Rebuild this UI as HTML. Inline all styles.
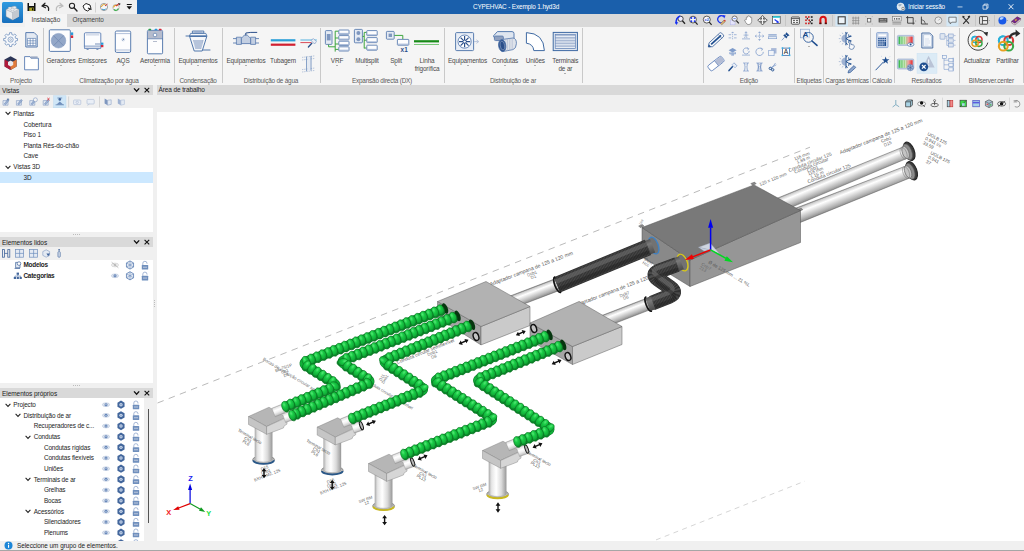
<!DOCTYPE html>
<html lang="pt"><head><meta charset="utf-8"><title>CYPEHVAC - Exemplo 1.hyd3d</title>
<style>
html,body{margin:0;padding:0}
body{width:1024px;height:551px;position:relative;overflow:hidden;background:#f0f0f0;font-family:"Liberation Sans",sans-serif;font-size:6.4px;color:#444;line-height:1}
div,span,svg{position:absolute;box-sizing:border-box}
.t{white-space:nowrap;letter-spacing:-0.05px}
.c{transform:translateX(-50%);text-align:center;white-space:nowrap;letter-spacing:-0.14px}
#titlebar{left:0;top:0;width:1024px;height:14px;background:#1a5fab}
#qat{left:0;top:0;width:136.6px;height:14px;background:#f1f1f1}
#tabs{left:0;top:14px;width:1024px;height:12.5px;background:#d9d9d9}
#ribbon{left:0;top:26.5px;width:1024px;height:58px;background:#f5f5f5}
.sep{width:1px;background:#c9c9c9;top:28px;height:55px}
.gl{top:78.1px;color:#5a5a5a;letter-spacing:-0.2px}
.bl{top:57px;color:#4a4a4a}
.dd{width:0;height:0;border-left:1.7px solid transparent;border-right:1.7px solid transparent;border-top:1.9px solid #6a6a6a;transform:translateX(-50%)}
.ph{left:0;width:152.5px;height:10.3px;background:#d9d9d9;color:#222}
.ph .t{left:2px;top:3px;font-size:6.5px}
.row{left:0;width:152.5px;height:10.65px;color:#222}
.row .t{top:2.1px}
svg{overflow:visible}

</style></head>
<body>
<div id="titlebar"></div>
<div id="qat"></div>
<div id="tabs"></div>
<div id="acttab" style="left:0;top:0;width:25px;height:26.5px;background:#f1f1f1"></div>
<div style="left:25px;top:14px;width:41.5px;height:13px;background:#f5f5f5"></div>
<div class="t" style="left:31.5px;top:16.6px;color:#444">Instalação</div>
<div class="t" style="left:72.5px;top:16.6px;color:#444">Orçamento</div>
<div class="t" style="left:473px;top:3.6px;color:#fff;letter-spacing:-0.14px">CYPEHVAC - Exemplo 1.hyd3d</div>
<div class="t" style="left:908px;top:3.8px;color:#fff;letter-spacing:-0.15px">Iniciar sessão</div>
<!-- app icon -->
<svg style="left:2px;top:2px" width="21" height="21" viewBox="0 0 21 21">
 <defs><linearGradient id="ag" x1="0" y1="0" x2="0" y2="1"><stop offset="0" stop-color="#2f9ae0"/><stop offset="1" stop-color="#176fbd"/></linearGradient></defs>
 <rect x="0" y="0" width="21" height="21" rx="1.5" fill="url(#ag)"/>
 <path d="M4 7.5 L10.5 4.5 L17 7.5 L17 14.5 L10.5 18 L4 14.5 Z" fill="#e9ecef" stroke="#7f8a96" stroke-width="0.5"/>
 <path d="M4 7.5 L10.5 10.5 L17 7.5 M10.5 10.5 L10.5 18" fill="none" stroke="#8d98a4" stroke-width="0.5"/>
 <path d="M10.5 10.5 L17 7.5 L17 14.5 L10.5 18 Z" fill="#c3c9d0"/>
 <ellipse cx="8" cy="6" rx="2" ry="1" fill="#f8f9fa" stroke="#8d98a4" stroke-width="0.4"/>
 <ellipse cx="12.5" cy="5.2" rx="2" ry="1" fill="#f8f9fa" stroke="#8d98a4" stroke-width="0.4"/>
 <ellipse cx="10.5" cy="7.8" rx="2" ry="1" fill="#f8f9fa" stroke="#8d98a4" stroke-width="0.4"/>
</svg>
<!-- quick access icons -->
<svg style="left:26px;top:2px" width="112" height="11" viewBox="26 2 112 11">
 <!-- save -->
 <rect x="27.5" y="3" width="8" height="8" fill="#111"/><rect x="29" y="3" width="5" height="3" fill="#f1f1f1"/><rect x="29.2" y="7.6" width="4.6" height="3.4" fill="#a8a228"/><rect x="32" y="8.2" width="1.2" height="2.2" fill="#111"/>
 <!-- undo -->
 <path d="M42 6 L45 3.2 M42 6 L45.5 7.8 M42 6 C46 4.5 49.5 6 48.5 10.5" fill="none" stroke="#222" stroke-width="1.2" stroke-linecap="round"/>
 <!-- redo -->
 <path d="M63 6 L60 3.2 M63 6 L59.5 7.8 M63 6 C59 4.5 55.5 6 56.5 10.5" fill="none" stroke="#bdbdbd" stroke-width="1.2" stroke-linecap="round"/>
 <!-- zoom -->
 <circle cx="72" cy="5.8" r="2.6" fill="none" stroke="#222" stroke-width="1.1"/><path d="M74 7.8 L77 11" stroke="#222" stroke-width="1.4" stroke-linecap="round"/>
 <!-- hand/pan -->
 <path d="M83 6 L86 3.5 L90 5 L91 8.5 L87.5 11 L84.5 9.5 Z" fill="#fff" stroke="#222" stroke-width="1"/><path d="M88 8 L91.5 9.5" stroke="#222" stroke-width="1.3"/>
 <rect x="95" y="2.5" width="0.7" height="10" fill="#c4c4c4"/>
 <!-- two colour icons -->
 <circle cx="104" cy="7" r="3.6" fill="#f7f7f7" stroke="#8c8c8c" stroke-width="0.8"/><path d="M101.5 7 A2.5 2.5 0 0 1 106 5.6" fill="none" stroke="#e2a020" stroke-width="1"/><path d="M106 8.5 A2.5 2.5 0 0 1 102 9" fill="none" stroke="#3a9ad0" stroke-width="1"/><path d="M105 6 L107.5 4" stroke="#d03030" stroke-width="0.9"/>
 <circle cx="116" cy="7.6" r="3.2" fill="#f7f7f7" stroke="#9a9a9a" stroke-width="0.6"/><path d="M113.6 7.6 A2.4 2.4 0 0 1 117.5 5.8" fill="none" stroke="#e2a020" stroke-width="1.1"/><path d="M118.3 8.4 A2.4 2.4 0 0 1 114 9.4" fill="none" stroke="#3ab04a" stroke-width="1.1"/><path d="M116 6.2 L119 3.6" stroke="#d03030" stroke-width="1.1"/><path d="M118 3 L120.5 3.4 L119.8 5.6" fill="#333"/>
 <!-- dropdown -->
 <rect x="126.8" y="4" width="5" height="1" fill="#111"/><path d="M126.6 6.2 L132 6.2 L129.3 9.4 Z" fill="#111"/>
</svg>
<!-- window controls -->
<svg style="left:890px;top:0" width="134" height="14" viewBox="890 0 134 14">
 <circle cx="900.6" cy="6.6" r="3.6" fill="#dfe7ee" stroke="#fff" stroke-width="0.5"/><path d="M898 5 Q900 3.4 902 4.4 Q901 6 899.4 6.6 Z" fill="#9fb2c4"/><circle cx="903" cy="8.6" r="2" fill="#8a8a8a" stroke="#fff" stroke-width="0.5"/><rect x="901.8" y="8.3" width="2.4" height="0.7" fill="#fff"/>
 <rect x="957.5" y="6.6" width="5" height="0.7" fill="#fff"/>
 <path d="M983 5.2 h3.8 v4 h-3.8 Z M984.2 5.2 v-1.1 h3.8 v4 h-1.2" fill="none" stroke="#fff" stroke-width="0.7"/>
 <path d="M1008.6 4.2 L1013.4 9.2 M1013.4 4.2 L1008.6 9.2" stroke="#fff" stroke-width="0.9"/>
</svg>

<div id="ribbon"></div>
<div class="sep" style="left:43.0px"></div>
<div class="sep" style="left:174.0px"></div>
<div class="sep" style="left:221.5px"></div>
<div class="sep" style="left:320.0px"></div>
<div class="sep" style="left:444.0px"></div>
<div class="sep" style="left:582.0px"></div>
<div class="sep" style="left:703.0px"></div>
<div class="sep" style="left:794.0px"></div>
<div class="sep" style="left:822.5px"></div>
<div class="sep" style="left:869.5px"></div>
<div class="sep" style="left:893.5px"></div>
<div class="sep" style="left:958.5px"></div>
<div class="sep" style="left:1022.5px"></div>
<div class="c bl" style="left:61px;line-height:8px;top:56.9px">Geradores</div>
<div class="dd" style="left:61px;top:64.6px"></div>
<div class="c bl" style="left:92.5px;line-height:8px;top:56.9px">Emissores</div>
<div class="dd" style="left:92.5px;top:64.6px"></div>
<div class="c bl" style="left:123px;line-height:8px;top:56.9px">AQS</div>
<div class="dd" style="left:123px;top:64.6px"></div>
<div class="c bl" style="left:155px;line-height:8px;top:56.9px">Aerotermia</div>
<div class="dd" style="left:155px;top:64.6px"></div>
<div class="c bl" style="left:198px;line-height:8px;top:56.9px">Equipamentos</div>
<div class="dd" style="left:198px;top:64.6px"></div>
<div class="c bl" style="left:246px;line-height:8px;top:56.9px">Equipamentos</div>
<div class="dd" style="left:246px;top:64.6px"></div>
<div class="c bl" style="left:283px;line-height:8px;top:56.9px">Tubagem</div>
<div class="c bl" style="left:337px;line-height:8px;top:56.9px">VRF</div>
<div class="dd" style="left:337px;top:64.6px"></div>
<div class="c bl" style="left:367px;line-height:8px;top:56.9px">Multisplit</div>
<div class="dd" style="left:367px;top:64.6px"></div>
<div class="c bl" style="left:396px;line-height:8px;top:56.9px">Split</div>
<div class="dd" style="left:396px;top:64.6px"></div>
<div class="c bl" style="left:427px;line-height:8px;top:56.9px">Linha<br>frigorífica</div>
<div class="c bl" style="left:467.5px;line-height:8px;top:56.9px">Equipamentos</div>
<div class="dd" style="left:467.5px;top:64.6px"></div>
<div class="c bl" style="left:505px;line-height:8px;top:56.9px">Condutas</div>
<div class="dd" style="left:505px;top:64.6px"></div>
<div class="c bl" style="left:535.4px;line-height:8px;top:56.9px">Uniões</div>
<div class="dd" style="left:535.4px;top:64.6px"></div>
<div class="c bl" style="left:565.4px;line-height:8px;top:56.9px">Terminais<br>de ar</div>
<div class="dd" style="left:565.4px;top:72.6px"></div>
<div class="c bl" style="left:977px;line-height:8px;top:56.9px">Actualizar</div>
<div class="c bl" style="left:1007.5px;line-height:8px;top:56.9px">Partilhar</div>
<div class="dd" style="left:808.8px;top:46.4px"></div>
<div class="c gl" style="left:21px">Projecto</div>
<div class="c gl" style="left:109px">Climatização por água</div>
<div class="c gl" style="left:198px">Condensação</div>
<div class="c gl" style="left:271px">Distribuição de água</div>
<div class="c gl" style="left:382px">Expansão directa (DX)</div>
<div class="c gl" style="left:513px">Distribuição de ar</div>
<div class="c gl" style="left:748.8px">Edição</div>
<div class="c gl" style="left:809px">Etiquetas</div>
<div class="c gl" style="left:847px">Cargas térmicas</div>
<div class="c gl" style="left:882px">Cálculo</div>
<div class="c gl" style="left:926.5px">Resultados</div>
<div class="c gl" style="left:991.3px">BIMserver.center</div>
<svg style="left:0;top:0" width="1024" height="85" viewBox="0 0 1024 85">
<defs>
 <linearGradient id="rg1" x1="0" y1="0" x2="1" y2="0"><stop offset="0" stop-color="#2fb84a"/><stop offset="0.45" stop-color="#a8d890"/><stop offset="0.7" stop-color="#f0a0a0"/><stop offset="1" stop-color="#e52a2a"/></linearGradient>
</defs>
<g id="ic-projecto">
 <!-- gear -->
 <path d="M15.65 38.36L17.52 38.55L17.52 40.65L15.65 40.84L15.05 42.30L16.23 43.75L14.75 45.23L13.30 44.05L11.84 44.65L11.65 46.52L9.55 46.52L9.36 44.65L7.90 44.05L6.45 45.23L4.97 43.75L6.15 42.30L5.55 40.84L3.68 40.65L3.68 38.55L5.55 38.36L6.15 36.90L4.97 35.45L6.45 33.97L7.90 35.15L9.36 34.55L9.55 32.68L11.65 32.68L11.84 34.55L13.30 35.15L14.75 33.97L16.23 35.45L15.05 36.90Z" fill="#f7f9fc" stroke="#6f8fbd" stroke-width="0.8" stroke-linejoin="round"/><circle cx="10.6" cy="39.6" r="2.6" fill="#f5f5f5" stroke="#6f8fbd" stroke-width="0.7"/><circle cx="10.6" cy="39.6" r="0.9" fill="none" stroke="#6f8fbd" stroke-width="0.5"/>
 <!-- sheet -->
 <path d="M25.8 32.6h8.4l3 3v11.4h-11.4z" fill="#e4eaf3" stroke="#4a70a8" stroke-width="0.9"/>
 <path d="M27.4 38.4h8.4v7.2h-8.4zM27.4 40.8h8.4M27.4 43.2h8.4M30.2 38.4v7.2M33 38.4v7.2" fill="#fff" stroke="#4a70a8" stroke-width="0.6"/>
 <!-- cube -->
 <path d="M10.6 56.2l6 3.2v7.2l-6 3.4-6-3.4v-7.2z" fill="#2b3556"/>
 <path d="M4.6 59.4l6 3.4v7.2l-6-3.4z" fill="#b01a3a"/>
 <path d="M16.6 59.4l-6 3.4v7.2l6-3.4z" fill="#e07a3a"/>
 <path d="M10.6 60.4l2.6 1.5v3l-2.6 1.5-2.6-1.5v-3z" fill="#e9e9ee"/>
 <!-- folder -->
 <path d="M24.6 56.6h5.4l1 1.6h7.4v11.6h-13.8z" fill="#fff" stroke="#5a7db3" stroke-width="0.9"/><rect x="30.6" y="56.4" width="7" height="1.8" fill="#9aa9c4"/>
</g>
<g id="ic-clima">
 <!-- geradores -->
 <rect x="49.3" y="29.8" width="21" height="21.6" rx="1" fill="#fdfdfe" stroke="#4a70a8" stroke-width="0.9"/>
 <circle cx="58.5" cy="40.7" r="7.3" fill="#93a7c8"/><circle cx="58.5" cy="40.7" r="7.3" fill="none" stroke="#7f97bf" stroke-width="0.5"/>
 <path d="M53.4 35.6l10.2 10.2M63.6 35.6l-10.2 10.2" stroke="#6f86b0" stroke-width="0.7"/>
 <rect x="70.8" y="32.4" width="2.4" height="2.6" fill="#2a9ad8"/><rect x="70.8" y="35.4" width="2.4" height="2.6" fill="#d6283a"/>
 <!-- emissores -->
 <rect x="84.4" y="32.8" width="16.4" height="15.4" rx="1" fill="#fbfcfe" stroke="#5a7db3" stroke-width="0.9"/>
 <rect x="86" y="33.6" width="13.2" height="2" fill="#d5dcea"/><rect x="84.4" y="46" width="16.4" height="2.4" fill="#d5dcea" stroke="#5a7db3" stroke-width="0.6"/>
 <rect x="86.6" y="48.4" width="2" height="1.6" fill="#7f97bf"/><rect x="96.4" y="48.4" width="2" height="1.6" fill="#7f97bf"/>
 <rect x="95" y="43" width="5" height="2.2" fill="#b9c6dc"/>
 <rect x="101" y="42.6" width="2.4" height="2.2" fill="#2a9ad8"/><rect x="101" y="45" width="2.4" height="2.2" fill="#d6283a"/>
 <!-- AQS -->
 <rect x="115.3" y="31" width="15.4" height="21.4" rx="1.4" fill="#fdfdfe" stroke="#4a70a8" stroke-width="0.9"/>
 <path d="M115.5 33.6h15M115.5 50h15" stroke="#7f97bf" stroke-width="0.6"/><circle cx="123.2" cy="39.6" r="1.5" fill="#e4eaf3" stroke="#b9c6dc" stroke-width="0.4"/><path d="M122.6 40.2l1.4-1.4" stroke="#2b4f8a" stroke-width="0.8"/>
 <!-- aerotermia -->
 <rect x="147.4" y="30.4" width="15.2" height="23.4" rx="1" fill="#fdfdfe" stroke="#4a70a8" stroke-width="0.9"/>
 <rect x="147.9" y="30.9" width="14.2" height="7.8" fill="#b5bccd"/><path d="M147.6 38.8h15" stroke="#4a70a8" stroke-width="0.7"/>
 <circle cx="155" cy="35" r="1.8" fill="#fff" stroke="#4a70a8" stroke-width="0.6"/><rect x="153" y="41" width="4" height="1" fill="#b5bccd"/>
 <rect x="148.4" y="28.8" width="2.8" height="1.5" rx="0.6" fill="#2ca04a"/><rect x="154.6" y="28.8" width="2.8" height="1.5" rx="0.6" fill="#2a9ad8"/><rect x="158.8" y="28.8" width="2.8" height="1.5" rx="0.6" fill="#d6283a"/>
</g>
<g id="ic-cond">
 <path d="M192.4 31h11.4v2.2h-11.4z" fill="#dfe6f0" stroke="#3f6aa3" stroke-width="0.8"/>
 <path d="M190.6 33.4h15.2l1.2 2.8h-17.6z" fill="#f5f7fa" stroke="#3f6aa3" stroke-width="0.8"/>
 <path d="M189.6 36.4l4.6 14.6h8l4.6-14.6z" fill="#f5f7fa" stroke="#3f6aa3" stroke-width="0.9"/>
 <path d="M193 40h10.6l-2.4 9h-5.8z" fill="#a9b9d4"/><path d="M195 40v8M197 40v9M199 40v9M201 40v8" stroke="#dfe6f0" stroke-width="0.5"/>
 <path d="M185.6 36h20.6M202.6 50h7.8" stroke="#3f6aa3" stroke-width="0.9"/>
 <path d="M194.4 32h7.4" stroke="#7f97bf" stroke-width="0.7"/>
</g>
<g id="ic-agua">
 <!-- valve -->
 <path d="M233 38.6h26M233 43h26" stroke="#4a70a8" stroke-width="0.8"/>
 <path d="M236.4 37.2h5v7.2h-5zM250.6 37.2h5v7.2h-5z" fill="#c3cfe2" stroke="#4a70a8" stroke-width="0.7"/>
 <path d="M241.4 38.4l3-3.4h2.8l3.4 3.4v5.2h-9.2z" fill="#c3cfe2" stroke="#4a70a8" stroke-width="0.7"/>
 <path d="M245.8 35.4v-2.4l5-0.6h6.4" fill="none" stroke="#2b4f8a" stroke-width="1"/>
 <!-- tubagem -->
 <rect x="270.8" y="39.2" width="24.6" height="2.2" fill="#2a9fd8"/><rect x="270.8" y="43.6" width="24.6" height="2.2" fill="#d02030"/>
 <!-- brush on lines -->
 <path d="M300.4 40h16.4" stroke="#2a9fd8" stroke-width="0.8"/><path d="M300.4 42.6h11" stroke="#d02030" stroke-width="0.8"/>
 <path d="M311 40.4l2.4-1.8 3 3-1.8 2.4z" fill="#e9eef6" stroke="#6f8fbd" stroke-width="0.6"/><path d="M311.8 43.2l-3.4 3.8" stroke="#2b4f8a" stroke-width="1.3" stroke-linecap="round"/>
 <!-- vertical pipe section -->
 <path d="M302 57.4l13-1.6M302 60l13-1.6M302 69.6l13-1.6M302 72l13-1.6" stroke="#8fa6cb" stroke-width="0.6" stroke-dasharray="1.4 0.8"/>
 <path d="M306.6 56.6v14.6M311 56v14.6" stroke="#6f8fbd" stroke-width="0.9"/><rect x="307.6" y="57" width="2.4" height="13.6" fill="#e4eaf3"/>
</g>
<g id="ic-dx">
 <!-- VRF -->
 <rect x="325.4" y="30.6" width="6.6" height="13.8" rx="0.8" fill="#e4eaf3" stroke="#4a70a8" stroke-width="0.8"/><rect x="326.8" y="34" width="3.8" height="6.4" fill="#7f97bf"/>
 <path d="M328.6 44.6v2.2h6.6M335.2 51.6v-20.4h3.4M335.2 38h3.4M335.2 44h3.4M335.2 49.4h3.4" fill="none" stroke="#3ea53e" stroke-width="1"/>
 <g fill="#fdfdfe" stroke="#4a70a8" stroke-width="0.8"><rect x="338.8" y="30" width="10.2" height="4.2" rx="0.6"/><rect x="338.8" y="35.6" width="10.2" height="4.2" rx="0.6"/><rect x="338.8" y="41.2" width="10.2" height="4.2" rx="0.6"/><rect x="338.8" y="46.8" width="10.2" height="4.2" rx="0.6"/></g>
 <path d="M339 33.4h9.8M339 39h9.8M339 44.6h9.8M339 50.2h9.8" stroke="#9fb2d2" stroke-width="0.9"/>
 <!-- Multisplit -->
 <rect x="354.4" y="29.4" width="8" height="13.4" rx="0.8" fill="#e4eaf3" stroke="#4a70a8" stroke-width="0.8"/><circle cx="358.4" cy="33" r="2" fill="#7f97bf"/><circle cx="358.4" cy="39.2" r="2" fill="#7f97bf"/>
 <path d="M362.6 36.4h1.6M364.2 48.4v-16h2.4M364.2 40.2h2.4M364.2 48h2.4" fill="none" stroke="#3ea53e" stroke-width="1"/>
 <g fill="#fdfdfe" stroke="#4a70a8" stroke-width="0.8"><rect x="366.8" y="30.6" width="10.4" height="5" rx="0.6"/><rect x="366.8" y="37.6" width="10.4" height="5" rx="0.6"/><rect x="366.8" y="45.2" width="10.4" height="5" rx="0.6"/></g>
 <path d="M367 34.8h10M367 41.8h10M367 49.4h10" stroke="#9fb2d2" stroke-width="0.9"/>
 <!-- Split -->
 <rect x="386.4" y="31.4" width="7.8" height="7.8" rx="0.8" fill="#e4eaf3" stroke="#4a70a8" stroke-width="0.8"/><rect x="388.6" y="33.6" width="3.4" height="3.4" fill="#7f97bf"/>
 <path d="M394.4 35.4h8.4v3.8" fill="none" stroke="#3ea53e" stroke-width="1"/>
 <rect x="397.4" y="39.4" width="11.4" height="5.8" rx="0.6" fill="#fdfdfe" stroke="#4a70a8" stroke-width="0.8"/><path d="M397.6 44.2h11" stroke="#9fb2d2" stroke-width="1"/>
 <text x="400.6" y="51.6" font-family="Liberation Sans, sans-serif" font-weight="bold" font-size="6.4" fill="#2b4f8a">x1</text>
 <!-- Linha -->
 <rect x="414" y="40.2" width="25" height="2.2" fill="#178a17"/><rect x="414" y="44" width="25" height="0.9" fill="#6cc46c"/>
</g>
<g id="ic-ar">
 <!-- fan -->
 <rect x="455.6" y="32.6" width="18" height="18" rx="1" fill="#e9eef6" stroke="#4a70a8" stroke-width="0.9"/>
 <circle cx="464.6" cy="41.6" r="6.6" fill="#fff" stroke="#4a70a8" stroke-width="0.8"/>
 <path d="M464.6 36v11.2M459 41.6h11.2M460.6 37.6l8 8M468.6 37.6l-8 8" stroke="#2b4f8a" stroke-width="1.2"/><circle cx="464.6" cy="41.6" r="1.2" fill="#fff"/>
 <path d="M474 41.6h4M476.4 39.8l2.4 1.8-2.4 1.8" fill="none" stroke="#a9b9d4" stroke-width="0.8"/>
 <!-- condutas -->
 <path d="M493.4 36l4-4.4h14.6q2 0 2 2v6.4h-18z" fill="#dfe6f0" stroke="#4a70a8" stroke-width="0.9"/>
 <rect x="494.4" y="36" width="9" height="4.6" rx="1.2" fill="#8fa0bf" stroke="#4a70a8" stroke-width="0.7"/>
 <path d="M501.4 39.6l11.6-1.6q3.6 0.6 3.4 5.6t-3.4 6l-10.6 2z" fill="#dfe3ea" stroke="#4a70a8" stroke-width="0.8"/>
 <path d="M505 39.2v12M507.4 38.8v12M509.8 38.4v12M512.2 38.2v11.6" stroke="#aab6cc" stroke-width="0.6"/>
 <ellipse cx="502.2" cy="45.6" rx="3.6" ry="6" fill="#2b4f8a" stroke="#4a70a8" stroke-width="0.8" transform="rotate(-8 502.2 45.6)"/><ellipse cx="502.4" cy="45.6" rx="2.2" ry="4.4" fill="none" stroke="#a9b9d4" stroke-width="0.5" transform="rotate(-8 502.4 45.6)"/>
 <!-- uniões -->
 <path d="M526.4 32.6q17.4 0.6 18 18h-10.6q-0.6-6.6-7.4-7.4z" fill="#fff" stroke="#3f6aa3" stroke-width="1"/>
 <!-- terminais -->
 <rect x="553.2" y="32.4" width="24.2" height="18.2" fill="#dfe6f0" stroke="#3f6aa3" stroke-width="1"/>
 <rect x="555.2" y="34.4" width="20.2" height="14.2" fill="#a9b9d4"/>
 <path d="M555.2 36.4h20.2M555.2 39.2h20.2M555.2 42h20.2M555.2 44.8h20.2M555.2 47.4h20.2" stroke="#eef2f8" stroke-width="1"/>
 <rect x="555.2" y="34.4" width="20.2" height="14.2" fill="none" stroke="#5a7db3" stroke-width="0.6"/>
</g>
<g id="ic-edicao">
<g transform="translate(716 40) rotate(-42.5)"><path d="M-10.4 0l3.4-2.6h14.4q1.4 0 1.4 1.3v2.6q0 1.3-1.4 1.3h-14.4z" fill="#f7f9fc" stroke="#42669c" stroke-width="0.8"/><path d="M-6.6 0h13.4" stroke="#1f4e8f" stroke-width="1.7"/><path d="M-10.4 0l2.2-1.7v3.4z" fill="#1f4e8f"/><path d="M5.4 -2.6v5.2" stroke="#42669c" stroke-width="0.6"/></g>
<g transform="translate(716 63.6) rotate(-38)"><rect x="-8.6" y="-3.3" width="17.2" height="6.6" rx="1.8" fill="#fff" stroke="#5a7db8" stroke-width="0.8"/><path d="M0.6 -2.9h6.2q1.4 0 1.4 1.4v3q0 1.4 -1.4 1.4h-6.2z" fill="#b3bcd4"/><path d="M0.6 -3.3v6.6" stroke="#5a7db8" stroke-width="0.6"/></g>
<g stroke="#7f9ccb" stroke-width="0.7" fill="none"><path d="M732.6 32.1v8" stroke-dasharray="1.2 0.8"/><path d="M728.6 34.7h2.6M734.0 34.7h2.6M728.6 37.9h2.6M734.0 37.9h2.6"/><path d="M731.6 33.1l1-1.2 1 1.2"/></g>
<g stroke="#7f9ccb" stroke-width="0.7" fill="none"><path d="M746 31.900000000000002v5.4M744.8 33.1l1.2-1.4 1.2 1.4M743.6 35.1h4.8"/><path d="M742 38.9h8"/><path d="M744 37.300000000000004h4" stroke-dasharray="1 0.8"/></g>
<g stroke="#7f9ccb" stroke-width="0.7" fill="none"><path d="M759.5 31.900000000000002v8.4M755.3 36.1h8.4" stroke-dasharray="1.6 0.7"/><path d="M758.4 33.1l1.1-1.3 1.1 1.3M758.4 39.1l1.1 1.3 1.1-1.3M756.5 35.0l-1.3 1.1 1.3 1.1M762.5 35.0l1.3 1.1-1.3 1.1"/></g>
<g><rect x="768.3" y="34.300000000000004" width="8.4" height="1.2" fill="#7f9ccb"/><rect x="768.3" y="36.7" width="8.4" height="2" fill="#e4eaf3" stroke="#7f9ccb" stroke-width="0.6"/></g>
<g><path d="M786.4 32.300000000000004l3.2 3.2-1.6 0.6-1.6 2.4-3.2-3.2 2.4-1.6z" fill="#1f4e8f"/><path d="M784.6 37.300000000000004l-2.8 3" stroke="#7f9ccb" stroke-width="0.9"/><path d="M785.4 34.5l2 2" stroke="#fff" stroke-width="0.8"/></g>
<g fill="#7f9ccb"><path d="M732.6 48.1l4 2.2-4 2.2-4-2.2z"/><path d="M730.6 52.5h4v1.2h-4zM731.2 54.300000000000004h2.8v1.2h-2.8z"/><path d="M729.4 51.900000000000006l1.2 0.8v2l-1.2-0.8zM735.8000000000001 51.900000000000006l-1.2 0.8v2l1.2-0.8z"/></g>
<g stroke="#7f9ccb" stroke-width="0.8" fill="none"><path d="M748.4 48.900000000000006a3 3 0 1 0 0.8 2"/><path d="M747 47.7l1.8 1-1.2 1.6" stroke-width="0.7"/><path d="M742 55.1h8" stroke-width="0.7"/></g>
<g stroke="#7f9ccb" stroke-width="0.8" fill="none"><path d="M762.3 49.300000000000004a3.7 3.7 0 1 0 1 2.6"/><path d="M760.7 47.900000000000006l2 1-1.2 1.8" stroke-width="0.7"/></g>
<g><rect x="771.1" y="48.1" width="5.4" height="5.4" fill="#a9b9d8"/><rect x="768.7" y="50.300000000000004" width="5.4" height="5.4" fill="#f1f4f9" stroke="#7f9ccb" stroke-width="0.6"/></g>
<g><rect x="782.4" y="48.1" width="7.2" height="7.2" fill="#fff" stroke="#1f4e8f" stroke-width="0.7"/><g fill="#3ab4e8"><rect x="781.6" y="47.300000000000004" width="1.6" height="1.6"/><rect x="788.8" y="47.300000000000004" width="1.6" height="1.6"/><rect x="781.6" y="54.5" width="1.6" height="1.6"/><rect x="788.8" y="54.5" width="1.6" height="1.6"/></g><text x="786" y="54.1" text-anchor="middle" font-family="Liberation Sans, sans-serif" font-size="6.6" fill="#222">A</text></g>
<g><path d="M732.0 64.8l2-2 3 3-2 2z" fill="#e9eef6" stroke="#7f9ccb" stroke-width="0.6"/><path d="M734.2 63l2.6 2.6" stroke="#7f9ccb" stroke-width="0.5"/><path d="M732.4 66.8l-3.4 3.8" stroke="#1f4e8f" stroke-width="1.5" stroke-linecap="round"/></g>
<g stroke="#7f9ccb" stroke-width="0.7" fill="none"><path d="M743 63h6M743 71h6"/><path d="M744.4 63q1.2 4 0 8M747.6 63q-1.2 4 0 8"/><path d="M746 64v6" stroke-dasharray="1 0.8" stroke-width="0.5"/></g>
<g stroke="#7f9ccb" stroke-width="0.7" fill="none"><path d="M756.3 63h6.4M756.3 71h6.4"/><path d="M757.9 63q1 4 0 8M761.1 63q-1 4 0 8" stroke="#5a7db8" stroke-width="0.9"/><path d="M759.5 64v6" stroke-dasharray="1 0.8" stroke-width="0.5"/></g>
<g stroke="#1f4e8f" fill="none"><path d="M775.5 63l-3.6 5M776.3 64.8l-5.6 3" stroke-width="0.8" stroke="#7f9ccb"/><circle cx="770.3" cy="68.4" r="1.2" stroke-width="0.9"/><circle cx="772.7" cy="69.8" r="1.2" stroke-width="0.9"/></g>
</g>
<g id="ic-etiq"><rect x="800.6" y="29.2" width="9" height="8.6" fill="#eef2f8" stroke="#8fa6cb" stroke-width="0.7"/><circle cx="808.4" cy="37.4" r="4.9" fill="#f5f5f5" fill-opacity="0.5" stroke="#2f5c9c" stroke-width="0.9"/><text x="805.6" y="37" text-anchor="middle" font-family="Liberation Sans, sans-serif" font-weight="bold" font-size="7.6" fill="#1f4e8f">A</text><path d="M812 41l5 4.4" stroke="#1f4e8f" stroke-width="1.6" stroke-linecap="round"/></g>
<g id="ic-cargas"><g><path d="M845.6 34.4a4.2 4.2 0 0 0 0 8.4z" fill="#9fb2d2"/><path d="M845.6 33.4L845.6 31.8" stroke="#9fb2d2" stroke-width="0.8"/><path d="M843.0 34.1L842.2 32.7" stroke="#9fb2d2" stroke-width="0.8"/><path d="M841.1 36.0L839.7 35.2" stroke="#9fb2d2" stroke-width="0.8"/><path d="M840.4 38.6L838.8 38.6" stroke="#9fb2d2" stroke-width="0.8"/><path d="M841.1 41.2L839.7 42.0" stroke="#9fb2d2" stroke-width="0.8"/><path d="M843.0 43.1L842.2 44.5" stroke="#9fb2d2" stroke-width="0.8"/><path d="M845.6 43.8L845.6 45.4" stroke="#9fb2d2" stroke-width="0.8"/><path d="M846.0 32.0v13.2" stroke="#1f4e8f" stroke-width="1"/><path d="M846.0 38.6l5-3M846.0 38.6l5 3M848.6 34.4l0.6 2.6 2.4-0.8M848.6 42.800000000000004l0.6-2.6 2.4 0.8M846.0 34.2l1.8-1.6M846.0 43.0l1.8 1.6" stroke="#1f4e8f" stroke-width="0.9" fill="none"/></g><path d="M849.6 46.4v-3.6q0.7-0.8 1.3 0v1.6l2.6 0.6q1 0.4 0.8 1.8-0.4 2.6-2.6 2.6-2 0-2.6-1.6z" fill="#f7f9fc" stroke="#42669c" stroke-width="0.7"/><g><path d="M845.6 57.4a4.2 4.2 0 0 0 0 8.4z" fill="#9fb2d2"/><path d="M845.6 56.4L845.6 54.8" stroke="#9fb2d2" stroke-width="0.8"/><path d="M843.0 57.1L842.2 55.7" stroke="#9fb2d2" stroke-width="0.8"/><path d="M841.1 59.0L839.7 58.2" stroke="#9fb2d2" stroke-width="0.8"/><path d="M840.4 61.6L838.8 61.6" stroke="#9fb2d2" stroke-width="0.8"/><path d="M841.1 64.2L839.7 65.0" stroke="#9fb2d2" stroke-width="0.8"/><path d="M843.0 66.1L842.2 67.5" stroke="#9fb2d2" stroke-width="0.8"/><path d="M845.6 66.8L845.6 68.4" stroke="#9fb2d2" stroke-width="0.8"/><path d="M846.0 55.0v13.2" stroke="#1f4e8f" stroke-width="1"/><path d="M846.0 61.6l5-3M846.0 61.6l5 3M848.6 57.4l0.6 2.6 2.4-0.8M848.6 65.8l0.6-2.6 2.4 0.8M846.0 57.2l1.8-1.6M846.0 66.0l1.8 1.6" stroke="#1f4e8f" stroke-width="0.9" fill="none"/></g><path d="M848.6 70.6l5.4-5 1.8 1.8-5.4 5-2.4 0.6z" fill="#8fa6cb" stroke="#1f4e8f" stroke-width="0.6"/></g>
<g id="ic-calc"><rect x="876.6" y="32.6" width="11.4" height="15" rx="0.8" fill="#cbd6ea" stroke="#7f9ccb" stroke-width="0.8"/><rect x="878.4" y="34.4" width="7.8" height="1.8" fill="#fff"/>
<rect x="878.2" y="37.8" width="1.5" height="1.5" fill="#1f4e8f"/>
<rect x="880.3" y="37.8" width="1.5" height="1.5" fill="#1f4e8f"/>
<rect x="882.4" y="37.8" width="1.5" height="1.5" fill="#1f4e8f"/>
<rect x="884.5" y="37.8" width="1.5" height="1.5" fill="#1f4e8f"/>
<rect x="878.2" y="40.0" width="1.5" height="1.5" fill="#1f4e8f"/>
<rect x="880.3" y="40.0" width="1.5" height="1.5" fill="#1f4e8f"/>
<rect x="882.4" y="40.0" width="1.5" height="1.5" fill="#1f4e8f"/>
<rect x="884.5" y="40.0" width="1.5" height="1.5" fill="#1f4e8f"/>
<rect x="878.2" y="42.2" width="1.5" height="1.5" fill="#1f4e8f"/>
<rect x="880.3" y="42.2" width="1.5" height="1.5" fill="#1f4e8f"/>
<rect x="882.4" y="42.2" width="1.5" height="1.5" fill="#1f4e8f"/>
<rect x="884.5" y="42.2" width="1.5" height="1.5" fill="#1f4e8f"/>
<rect x="878.2" y="44.4" width="1.5" height="1.5" fill="#1f4e8f"/>
<rect x="880.3" y="44.4" width="1.5" height="1.5" fill="#1f4e8f"/>
<rect x="882.4" y="44.4" width="1.5" height="1.5" fill="#1f4e8f"/>
<rect x="884.5" y="44.4" width="1.5" height="1.5" fill="#1f4e8f"/>
<rect x="884.5" y="42.2" width="1.5" height="3.7" fill="#1f4e8f"/>
<path d="M875.6 70.2l8-8.4" stroke="#2f5c9c" stroke-width="1"/><path d="M885.6 56.6l1 2.6 2.8 0.1-2.2 1.7 0.8 2.7-2.4-1.6-2.3 1.6 0.8-2.7-2.2-1.7 2.8-0.1z" fill="#1f4e8f"/><path d="M889 57.4l1-1M889.6 61.4l1.2 0.4M882 56.8l-0.8-0.8" stroke="#9fb2d2" stroke-width="0.5"/></g>
<g id="ic-res"><rect x="897.4" y="35.4" width="16.4" height="10" rx="1" fill="#c3cfe2" stroke="#8fa6cb" stroke-width="0.6"/><rect x="898.6" y="36.6" width="14" height="7.6" fill="url(#rg1)"/><rect x="900.0" y="36.6" width="0.6" height="7.6" fill="#eaf6ea" opacity="0.8"/><rect x="901.7" y="36.6" width="0.6" height="7.6" fill="#eaf6ea" opacity="0.8"/><rect x="903.4" y="36.6" width="0.6" height="7.6" fill="#eaf6ea" opacity="0.8"/><rect x="905.1" y="36.6" width="0.6" height="7.6" fill="#eaf6ea" opacity="0.8"/><ellipse cx="910.6" cy="44.6" rx="3.2" ry="1.8" fill="#fff" stroke="#2f5c9c" stroke-width="0.6"/><circle cx="910.6" cy="44.6" r="1" fill="#1f4e8f"/>
<rect x="897.4" y="59" width="16.4" height="10" rx="1" fill="#c3cfe2" stroke="#8fa6cb" stroke-width="0.6"/><rect x="898.6" y="60.2" width="14" height="7.6" fill="url(#rg1)"/><rect x="900.0" y="60.2" width="0.6" height="7.6" fill="#eaf6ea" opacity="0.8"/><rect x="901.7" y="60.2" width="0.6" height="7.6" fill="#eaf6ea" opacity="0.8"/><rect x="903.4" y="60.2" width="0.6" height="7.6" fill="#eaf6ea" opacity="0.8"/><rect x="905.1" y="60.2" width="0.6" height="7.6" fill="#eaf6ea" opacity="0.8"/><circle cx="910.4" cy="67.6" r="3.2" fill="#9fb2d2" stroke="#5a7db8" stroke-width="0.5"/><path d="M910.4 64.8v5.6M908 66.2l4.8 2.8M908 69l4.8-2.8" stroke="#42669c" stroke-width="0.6"/>
<path d="M921.8 33h8l3 3v12h-11z" fill="#e4eaf3" stroke="#42669c" stroke-width="0.9"/><path d="M923.6 34.6h6l2 2v9.8h-8z" fill="#f7f9fc" stroke="#8fa6cb" stroke-width="0.5"/><path d="M925 39h4M925 41h5M925 43h5M925 45h3.4" stroke="#c3cfe2" stroke-width="0.6"/>
<g fill="#dfe6f0" stroke="#7f9ccb" stroke-width="0.6"><rect x="940" y="33.6" width="5" height="5.6" rx="0.6"/><rect x="948.6" y="34" width="4.6" height="3.4"/><rect x="948.6" y="38.8" width="4.6" height="3.4"/><rect x="948.6" y="43.6" width="4.6" height="3.4"/><path d="M945 36.4h1.8v9h1.8M946.8 35.8h1.8M946.8 40.6h1.8" fill="none"/><path d="M953.6 35.6h2M953.6 40.4h2M953.6 45.2h2" stroke="#a9b9d8" stroke-width="0.8"/></g>
<rect x="917" y="53.2" width="20" height="20.2" fill="#dcebf6" stroke="#c9e0f2" stroke-width="0.4"/><path d="M928.6 55.8l6 11.6h-12z" fill="#b9c3d6"/><rect x="928" y="59.4" width="1.2" height="4" fill="#f1f4f9"/><rect x="928" y="64.4" width="1.2" height="1.2" fill="#f1f4f9"/><circle cx="923.8" cy="66.8" r="4.4" fill="#1f4e8f"/><path d="M922 65l3.6 3.6M925.6 65l-3.6 3.6" stroke="#fff" stroke-width="1.2"/>
<g fill="#f1f4f9" stroke="#7f9ccb" stroke-width="0.6"><rect x="942.4" y="55.4" width="4.2" height="3.2"/><rect x="948.8" y="58.6" width="4.4" height="3.2"/><rect x="948.8" y="63.2" width="4.4" height="3.2"/><rect x="948.8" y="67.8" width="4.4" height="3.2"/><path d="M944 58.6v10.8h4.8M944 60.2h4.8M944 64.8h4.8" fill="none"/><path d="M953.2 57.6v13" fill="none"/></g></g>
<g id="ic-bim"><path d="M985.6 33.6a10 10 0 1 0 2.2 9" fill="none" stroke="#2c2c2c" stroke-width="0.9"/><path d="M983.4 32.6l4.6-0.6-0.8 4.4z" fill="#2c2c2c"/><g fill="none" stroke-width="1.5"><circle cx="975.078" cy="39.478" r="3.1" stroke="#2ab0d8"/><circle cx="978.922" cy="39.478" r="3.1" stroke="#d83a3a"/><circle cx="978.922" cy="43.321999999999996" r="3.1" stroke="#3aa84a"/><circle cx="975.078" cy="43.321999999999996" r="3.1" stroke="#e8a020"/><path d="M971.978 39.478a3.1 3.1 0 0 1 3.1 -3.1" stroke="#2ab0d8"/></g><g fill="none" stroke-width="2.1"><circle cx="1003.272" cy="40.672" r="4.4" stroke="#2ab0d8"/><circle cx="1008.728" cy="40.672" r="4.4" stroke="#d83a3a"/><circle cx="1008.728" cy="46.128" r="4.4" stroke="#3aa84a"/><circle cx="1003.272" cy="46.128" r="4.4" stroke="#e8a020"/><path d="M998.8720000000001 40.672a4.4 4.4 0 0 1 4.4 -4.4" stroke="#2ab0d8"/></g><path d="M1009.6 38.6q0.6-5 7-5.4" fill="none" stroke="#2c2c2c" stroke-width="2.2"/><path d="M1015.6 29.6l4.8 3.8-4.8 3.6z" fill="#2c2c2c"/></g>
</svg>

<svg style="left:660px;top:14px" width="364" height="13" viewBox="660 14 364 13">
<g id="tb1">
 <!-- zoom previous -->
 <circle cx="680.6" cy="18.8" r="2.6" fill="#eef" stroke="#222" stroke-width="0.8"/><path d="M682.4 20.8l2.6 3" stroke="#222" stroke-width="1.3"/><path d="M676.2 23.6q-0.6-6 4-7.6" fill="none" stroke="#1832f0" stroke-width="1.5"/><path d="M675 22l1.4 3 1.8-2.8z" fill="#1832f0"/>
 <!-- zoom extents -->
 <circle cx="693" cy="19.6" r="3.4" fill="#f4f6ff" stroke="#333" stroke-width="0.8"/><path d="M695.4 22.2l2.2 2.4" stroke="#222" stroke-width="1.2"/><g fill="#1832f0"><circle cx="691.4" cy="18" r="0.9"/><circle cx="694.6" cy="18" r="0.9"/><circle cx="691.4" cy="21.2" r="0.9"/><circle cx="694.6" cy="21.2" r="0.9"/></g>
 <!-- zoom x2 -->
 <circle cx="706.8" cy="19.6" r="3.5" fill="#fafafa" stroke="#333" stroke-width="0.8"/><path d="M709.2 22.2l2.4 2.6" stroke="#222" stroke-width="1.2"/><text x="704.6" y="21.2" font-family="Liberation Sans, sans-serif" font-size="3.8" font-weight="bold" fill="#2a52e0">x2</text>
 <!-- redraw -->
 <path d="M723.6 16.6a3.6 3.6 0 1 0 1 4" fill="none" stroke="#1832f0" stroke-width="1.3"/><path d="M722.4 15l3.2 0.6-1.4 2.8z" fill="#1832f0"/><path d="M720.4 23.6l3.6-3.4 1.4 1.4-3.6 3.2z" fill="#d8b070" stroke="#7a5a2a" stroke-width="0.4"/><circle cx="724.8" cy="20.6" r="0.8" fill="#e03030"/>
 <!-- zoom window -->
 <rect x="730.4" y="20" width="4.6" height="4.8" fill="#e4e4fa" stroke="#b4b4ea" stroke-width="0.5"/><circle cx="734.6" cy="18.6" r="2.6" fill="#f4f6ff" stroke="#555" stroke-width="0.8"/><path d="M736.4 20.6l2.4 2.8" stroke="#222" stroke-width="1.2"/><path d="M733.4 18.6h2.4" stroke="#3a62e0" stroke-width="0.7"/>
 <!-- hand -->
 <path d="M746.4 19.6v-2.4q0.7-0.9 1.3 0v-1q0.7-0.9 1.4 0v0.4q0.7-0.8 1.4 0v1q0.6-0.7 1.2 0v4.2q-0.4 2.6-2.8 2.8-2.2 0-3-1.8l-1.3-2.8q0.5-1 1.8-0.4z" fill="#fff" stroke="#666" stroke-width="0.6"/>
 <!-- pan 4-way -->
 <path d="M762.5 15.4l2 2.4h-1v1.4h1.4v-1l2.4 2-2.4 2v-1h-1.4v1.4h1l-2 2.4-2-2.4h1v-1.4h-1.4v1l-2.4-2 2.4-2v1h1.4v-1.4h-1z" fill="#f4f4f4" stroke="#333" stroke-width="0.7"/>
 <!-- window -->
 <rect x="772.6" y="16.4" width="7.6" height="7.2" fill="#fff" stroke="#444" stroke-width="0.7"/><rect x="772.9" y="16.2" width="7" height="1.6" fill="#25c8d8"/><path d="M774.6 19.6l3.6 2.6" stroke="#1832f0" stroke-width="1.2"/><path d="M779 23l-2.8-0.4 1.6-2.2z" fill="#1832f0"/>
 <rect x="785.2" y="15" width="0.7" height="11" fill="#bdbdbd"/>
 <!-- coords -->
 <rect x="791.4" y="17" width="8" height="7.2" rx="0.8" fill="#f4f4f4" stroke="#333" stroke-width="0.8"/><path d="M791.6 18.6h7.6" stroke="#333" stroke-width="0.8"/><path d="M793 20.4h2M796 20.4h2M793 22.4h2M796 22.4h2" stroke="#444" stroke-width="0.9"/>
 <!-- red grid -->
 <g fill="#d01818"><rect x="805.2" y="16.2" width="1.6" height="1.6"/><rect x="808" y="16.2" width="1.6" height="1.6"/><rect x="805.2" y="19.4" width="1.6" height="1.6"/><rect x="808.4" y="19.4" width="1.6" height="1.6"/><rect x="805.2" y="22.6" width="1.6" height="1.6"/><rect x="808" y="22.6" width="1.6" height="1.6"/></g>
 <g fill="#222"><rect x="810.8" y="16.2" width="1.8" height="1.6"/><rect x="811.2" y="19.4" width="1.6" height="1.6"/><rect x="810.8" y="22.6" width="1.8" height="1.6"/><rect x="806.8" y="17.8" width="1.2" height="1.6"/><rect x="809.6" y="21" width="1.2" height="1.6"/></g>
 <!-- magnet -->
 <path d="M820.4 24v-4.6a2.7 2.7 0 0 1 5.4 0V24" fill="none" stroke="#d81010" stroke-width="2"/><rect x="819.4" y="22.6" width="2" height="1.6" fill="#4a1010"/><rect x="824.8" y="22.6" width="2" height="1.6" fill="#4a1010"/>
 <rect x="832" y="15" width="0.7" height="11" fill="#bdbdbd"/>
 <!-- snap square highlighted -->
 <rect x="835.4" y="14.4" width="12.6" height="12" fill="#d3e7f5"/><rect x="838.2" y="16.8" width="7" height="7" fill="#eef3f7" stroke="#3c3c3c" stroke-width="1.1"/>
 <!-- grid -->
 <path d="M852 18h7.4M852 20.6h7.4M852 23.2h7.4M853.2 16.6v8M855.8 16.6v8M858.4 16.6v8" stroke="#8a8a8a" stroke-width="0.7"/>
 <!-- small square -->
 <rect x="867.4" y="18.6" width="3.4" height="3.4" fill="#f4f4f4" stroke="#555" stroke-width="0.7"/><path d="M865.4 16.6h0.8M871.8 16.6h0.8M865.4 24h0.8M871.8 24h0.8" stroke="#999" stroke-width="0.7"/>
 <!-- dark ruler -->
 <rect x="878.6" y="18" width="8.8" height="4.6" rx="0.6" fill="#5a5a5a"/><path d="M880 19.4h3.6M884.6 19.4h1.6M880 21.2h6" stroke="#c9c9c9" stroke-width="0.6"/>
 <!-- 1.00 ruler -->
 <rect x="892.4" y="16.6" width="8.8" height="4.4" fill="#eaeaea" stroke="#777" stroke-width="0.6"/><path d="M894 18.8h1M896 18.8h1.4M898.4 18.8h1.4" stroke="#444" stroke-width="1.2"/><path d="M892.4 22.6h8.8M892.4 24h8.8" stroke="#777" stroke-width="0.6"/>
 <!-- crop -->
 <path d="M907.6 16v7.2h7M906 17.6h7.2v7" fill="none" stroke="#3c3c3c" stroke-width="0.9"/><circle cx="915.8" cy="21" r="0.4" fill="#555"/>
 <!-- angle -->
 <path d="M921.4 16.6v7.4h6.6" fill="none" stroke="#3c3c3c" stroke-width="0.9"/><path d="M921.6 19.6q3.4 0.6 3.8 4.2" fill="none" stroke="#3c3c3c" stroke-width="0.7"/>
 <!-- circle clock -->
 <circle cx="938.4" cy="20.4" r="3.5" fill="#ececec" stroke="#7a7a7a" stroke-width="0.7"/><path d="M938.4 20.4l1.8-1.8" stroke="#7a7a7a" stroke-width="0.6"/>
 <!-- speech highlighted -->
 <rect x="946.4" y="14.4" width="12" height="12" fill="#d3e7f5"/><path d="M948.8 17.2h7.4v5h-4.4l-1.6 1.8v-1.8h-1.4z" fill="#eaf2f8" stroke="#555" stroke-width="0.7"/>
 <!-- tools cross -->
 <path d="M963 17l6 6.6M969.4 16.8l-6.2 7" stroke="#2c2c2c" stroke-width="1.1"/><path d="M962.4 16.4l2 0.6M968 17l2-0.8" stroke="#2c2c2c" stroke-width="1.6"/>
 <rect x="975" y="15" width="0.7" height="11" fill="#bdbdbd"/>
 <!-- layout -->
 <rect x="979.6" y="16.6" width="8" height="7.6" rx="0.6" fill="#f0f0f0" stroke="#3c3c3c" stroke-width="0.9"/><path d="M982.4 16.6v7.6M982.4 20.6h5.2" stroke="#3c3c3c" stroke-width="0.9"/><circle cx="989.6" cy="20.6" r="0.4" fill="#555"/>
 <rect x="994" y="15" width="0.7" height="11" fill="#bdbdbd"/>
 <!-- globe -->
 <circle cx="1002.4" cy="20.4" r="4" fill="#1a5ae8"/><path d="M999.6 18.6q2-2.4 4.4-1.2-0.6 1.8-2.6 2.2t-1.8-1z" fill="#8ec0ff"/><circle cx="1001.2" cy="18.4" r="1.2" fill="#cfe4ff" opacity="0.7"/><circle cx="1007.6" cy="20.6" r="0.4" fill="#555"/>
 <!-- book -->
 <path d="M1011.6 21.4l5.6-4.6 3.4 1.8-5.6 4.8z" fill="#7a2a8a" stroke="#4a1458" stroke-width="0.5"/><path d="M1011.6 21.4v1.6l3.4 2 5.6-4.8v-1.6l-5.6 4.8z" fill="#e8e0d0" stroke="#4a1458" stroke-width="0.4"/><rect x="1015" y="19.2" width="1.8" height="1.4" fill="#e8c020" transform="rotate(-35 1016 20)"/>
</g>
</svg>
<svg style="left:880px;top:96px" width="144" height="15" viewBox="880 96 144 15">
 <!-- work area view toolbar -->
 <path d="M895.8 100v4.6l-3.2 2.4M895.8 104.6l3.4 2.2" fill="none" stroke="#6aa0b8" stroke-width="0.8"/>
 <path d="M905.6 101.8h5v5h-5zM905.6 101.8l1.8-1.8h5v5l-1.8 1.8M910.6 101.8l1.8-1.8" fill="#a9d4e6" stroke="#333" stroke-width="0.7"/>
 <ellipse cx="921.6" cy="103.8" rx="4" ry="2.2" fill="#fff" stroke="#555" stroke-width="0.6"/><circle cx="921.6" cy="103" r="1.7" fill="#111"/><path d="M923 105.4l2 1.2" stroke="#333" stroke-width="0.8"/>
 <ellipse cx="934.6" cy="105" rx="3.8" ry="1.7" fill="none" stroke="#333" stroke-width="0.7"/><path d="M934.6 100.8v4.4" stroke="#333" stroke-width="0.8"/><circle cx="934.6" cy="100.6" r="1" fill="#fff" stroke="#333" stroke-width="0.6"/>
 <rect x="942" y="97.6" width="0.7" height="12" fill="#d0d0d0"/>
 <rect x="947.2" y="100.4" width="2.8" height="6.4" fill="#a9d4e6" stroke="#333" stroke-width="0.6"/><rect x="950" y="100.4" width="2.8" height="6.4" fill="#f08a8a" stroke="#c03030" stroke-width="0.6"/>
 <rect x="960" y="100.2" width="6.4" height="6.6" fill="#3cd84a" stroke="#333" stroke-width="0.6"/><path d="M960 106.8l6.4-6.6" stroke="#333" stroke-width="0.6"/><rect x="962" y="103.2" width="2.6" height="2.6" fill="#a9d4e6"/>
 <rect x="972.8" y="100.4" width="6.6" height="6.4" fill="#a9d4e6" stroke="#3a3ac0" stroke-width="0.6"/><rect x="972.8" y="101.8" width="6.6" height="1.6" fill="#5a5ae0"/>
 <path d="M989 99.8l3.6 1.8v4.2l-3.6 1.8-3.6-1.8v-4.2z" fill="#a9c4d6" stroke="#444" stroke-width="0.6"/><path d="M985.4 101.6l3.6 1.8 3.6-1.8M989 103.4v4.2" fill="none" stroke="#444" stroke-width="0.5"/><rect x="986.6" y="103.6" width="1.6" height="1.4" fill="#e05050"/><rect x="989.8" y="104.2" width="1.6" height="1.4" fill="#50b050"/>
 <ellipse cx="1001.6" cy="103.8" rx="4" ry="2.3" fill="#fff" stroke="#222" stroke-width="0.7"/><circle cx="1001.6" cy="103.8" r="1.8" fill="#111"/><path d="M998 106.6l7.2-5.6" stroke="#222" stroke-width="0.6"/>
 <rect x="1009.2" y="97.6" width="0.7" height="12" fill="#d0d0d0"/>
 <path d="M1014.6 101.4q2.4-1.8 4.6 0.4 1.4 2.4 0 4.4-2 1.8-4.4 0.4" fill="#f4f4f4" stroke="#777" stroke-width="0.7"/><path d="M1013.6 100.6h4M1013.6 102h3.6" stroke="#777" stroke-width="0.6"/>
</svg>

<div class="ph" style="top:84.7px"><div class="t">Vistas</div></div>
<svg style="left:132px;top:84.7px" width="20" height="10.3" viewBox="0 0 20 10.3"><path d="M2 3.4L4.6 6.2L7.2 3.4" fill="none" stroke="#111" stroke-width="1.3"/><path d="M12.6 2.8L17.2 7.4M17.2 2.8L12.6 7.4" stroke="#111" stroke-width="1.1"/></svg>
<div style="left:0;top:95px;width:152.5px;height:13.2px;background:#f0f0f0"></div>
<div style="left:0;top:108.2px;width:152.5px;height:124px;background:#fff"></div>
<div style="left:0;top:172.2px;width:152.5px;height:10.6px;background:#cce8ff"></div>
<svg style="left:4.700000000000001px;top:111.39999999999999px" width="6" height="4.4" viewBox="0 0 6 4.4"><path d="M0.6 0.8L3 3.4L5.4 0.8" fill="none" stroke="#222" stroke-width="1.05"/></svg>
<div class="t" style="left:13.3px;top:110.89999999999999px;color:#1c1c1c">Plantas</div>
<div class="t" style="left:23.450000000000003px;top:121.5px;color:#1c1c1c">Cobertura</div>
<div class="t" style="left:23.450000000000003px;top:132.0px;color:#1c1c1c">Piso 1</div>
<div class="t" style="left:23.450000000000003px;top:142.60000000000002px;color:#1c1c1c">Planta Rés-do-chão</div>
<div class="t" style="left:23.450000000000003px;top:153.3px;color:#1c1c1c">Cave</div>
<svg style="left:4.700000000000001px;top:164.60000000000002px" width="6" height="4.4" viewBox="0 0 6 4.4"><path d="M0.6 0.8L3 3.4L5.4 0.8" fill="none" stroke="#222" stroke-width="1.05"/></svg>
<div class="t" style="left:13.3px;top:164.10000000000002px;color:#1c1c1c">Vistas 3D</div>
<div class="t" style="left:23.450000000000003px;top:174.70000000000002px;color:#1c1c1c">3D</div>
<div style="left:72.5px;top:233.6px;width:8px;height:1px;background:repeating-linear-gradient(90deg,#bdbdbd 0 1px,transparent 1px 2px)"></div>
<div class="ph" style="top:236.6px"><div class="t">Elementos lidos</div></div>
<svg style="left:132px;top:236.6px" width="20" height="10.3" viewBox="0 0 20 10.3"><path d="M2 3.4L4.6 6.2L7.2 3.4" fill="none" stroke="#111" stroke-width="1.3"/><path d="M12.6 2.8L17.2 7.4M17.2 2.8L12.6 7.4" stroke="#111" stroke-width="1.1"/></svg>
<div style="left:0;top:246.9px;width:152.5px;height:13px;background:#f0f0f0"></div>
<div style="left:0;top:259.8px;width:152.5px;height:123.6px;background:#fff"></div>
<div class="t" style="left:23.4px;top:262.2px;color:#1c1c1c;font-weight:bold;letter-spacing:-0.2px">Modelos</div>
<div class="t" style="left:23.4px;top:272.9px;color:#1c1c1c;font-weight:bold;letter-spacing:-0.2px">Categorias</div>
<div style="left:72.5px;top:385px;width:8px;height:1px;background:repeating-linear-gradient(90deg,#bdbdbd 0 1px,transparent 1px 2px)"></div>
<div style="left:154.4px;top:299.6px;width:1px;height:8px;background:repeating-linear-gradient(180deg,#bdbdbd 0 1px,transparent 1px 2px)"></div>
<div class="ph" style="top:388px"><div class="t">Elementos próprios</div></div>
<svg style="left:132px;top:388px" width="20" height="10.3" viewBox="0 0 20 10.3"><path d="M2 3.4L4.6 6.2L7.2 3.4" fill="none" stroke="#111" stroke-width="1.3"/><path d="M12.6 2.8L17.2 7.4M17.2 2.8L12.6 7.4" stroke="#111" stroke-width="1.1"/></svg>
<div style="left:0;top:398.3px;width:143.8px;height:142.7px;background:#fff"></div>
<div style="left:147.7px;top:409px;width:0.9px;height:114px;background:#555"></div>
<svg style="left:4.700000000000001px;top:402.5px" width="6" height="4.4" viewBox="0 0 6 4.4"><path d="M0.6 0.8L3 3.4L5.4 0.8" fill="none" stroke="#222" stroke-width="1.05"/></svg>
<div class="t" style="left:13.3px;top:402.0px;color:#1c1c1c;letter-spacing:-0.12px">Projecto</div>
<svg style="left:14.9px;top:413.167px" width="6" height="4.4" viewBox="0 0 6 4.4"><path d="M0.6 0.8L3 3.4L5.4 0.8" fill="none" stroke="#222" stroke-width="1.05"/></svg>
<div class="t" style="left:23.5px;top:412.667px;color:#1c1c1c;letter-spacing:-0.12px">Distribuição de ar</div>
<div class="t" style="left:33.7px;top:423.334px;color:#1c1c1c;letter-spacing:-0.12px">Recuperadores de c...</div>
<svg style="left:25.1px;top:434.501px" width="6" height="4.4" viewBox="0 0 6 4.4"><path d="M0.6 0.8L3 3.4L5.4 0.8" fill="none" stroke="#222" stroke-width="1.05"/></svg>
<div class="t" style="left:33.7px;top:434.001px;color:#1c1c1c;letter-spacing:-0.12px">Condutas</div>
<div class="t" style="left:43.9px;top:444.668px;color:#1c1c1c;letter-spacing:-0.12px">Condutas rígidas</div>
<div class="t" style="left:43.9px;top:455.335px;color:#1c1c1c;letter-spacing:-0.12px">Condutas flexíveis</div>
<div class="t" style="left:43.9px;top:466.002px;color:#1c1c1c;letter-spacing:-0.12px">Uniões</div>
<svg style="left:25.1px;top:477.169px" width="6" height="4.4" viewBox="0 0 6 4.4"><path d="M0.6 0.8L3 3.4L5.4 0.8" fill="none" stroke="#222" stroke-width="1.05"/></svg>
<div class="t" style="left:33.7px;top:476.669px;color:#1c1c1c;letter-spacing:-0.12px">Terminais de ar</div>
<div class="t" style="left:43.9px;top:487.336px;color:#1c1c1c;letter-spacing:-0.12px">Grelhas</div>
<div class="t" style="left:43.9px;top:498.003px;color:#1c1c1c;letter-spacing:-0.12px">Bocas</div>
<svg style="left:25.1px;top:509.17px" width="6" height="4.4" viewBox="0 0 6 4.4"><path d="M0.6 0.8L3 3.4L5.4 0.8" fill="none" stroke="#222" stroke-width="1.05"/></svg>
<div class="t" style="left:33.7px;top:508.67px;color:#1c1c1c;letter-spacing:-0.12px">Acessórios</div>
<div class="t" style="left:43.9px;top:519.337px;color:#1c1c1c;letter-spacing:-0.12px">Silenciadores</div>
<div class="t" style="left:43.9px;top:530.0039999999999px;color:#1c1c1c;letter-spacing:-0.12px">Plenums</div>
<svg style="left:0;top:0" width="153" height="551" viewBox="0 0 153 551">
<g><ellipse cx="106" cy="404.7" rx="3.6" ry="1.9" fill="#dfe6f0" stroke="#a9b9d4" stroke-width="0.5"/><circle cx="106" cy="404.7" r="1.5" fill="#5a7db3"/><circle cx="106" cy="404.7" r="0.6" fill="#dfe6f0"/><polygon points="121.00,400.60 124.55,402.65 124.55,406.75 121.00,408.80 117.45,406.75 117.45,402.65" fill="#42669c"/><circle cx="121" cy="404.7" r="1.7" fill="#c9d5e8"/><circle cx="121" cy="404.7" r="0.7" fill="#6f8fbd"/><path d="M133.8 404.7v-1.6a2.1 2.1 0 0 1 4.2 0v0.4" fill="none" stroke="#8fa6cb" stroke-width="0.8"/><rect x="132.8" y="404.7" width="6.4" height="4.6" rx="0.5" fill="#6f8fbd"/><rect x="134" y="406.29999999999995" width="4" height="1.4" fill="#a9b9d4"/></g>
<g><ellipse cx="106" cy="415.36699999999996" rx="3.6" ry="1.9" fill="#dfe6f0" stroke="#a9b9d4" stroke-width="0.5"/><circle cx="106" cy="415.36699999999996" r="1.5" fill="#5a7db3"/><circle cx="106" cy="415.36699999999996" r="0.6" fill="#dfe6f0"/><polygon points="121.00,411.27 124.55,413.32 124.55,417.42 121.00,419.47 117.45,417.42 117.45,413.32" fill="#42669c"/><circle cx="121" cy="415.36699999999996" r="1.7" fill="#c9d5e8"/><circle cx="121" cy="415.36699999999996" r="0.7" fill="#6f8fbd"/><path d="M133.8 415.36699999999996v-1.6a2.1 2.1 0 0 1 4.2 0v0.4" fill="none" stroke="#8fa6cb" stroke-width="0.8"/><rect x="132.8" y="415.36699999999996" width="6.4" height="4.6" rx="0.5" fill="#6f8fbd"/><rect x="134" y="416.9669999999999" width="4" height="1.4" fill="#a9b9d4"/></g>
<g><ellipse cx="106" cy="426.034" rx="3.6" ry="1.9" fill="#dfe6f0" stroke="#a9b9d4" stroke-width="0.5"/><circle cx="106" cy="426.034" r="1.5" fill="#5a7db3"/><circle cx="106" cy="426.034" r="0.6" fill="#dfe6f0"/><polygon points="121.00,421.93 124.55,423.98 124.55,428.08 121.00,430.13 117.45,428.08 117.45,423.98" fill="#42669c"/><circle cx="121" cy="426.034" r="1.7" fill="#c9d5e8"/><circle cx="121" cy="426.034" r="0.7" fill="#6f8fbd"/><path d="M133.8 426.034v-1.6a2.1 2.1 0 0 1 4.2 0v0.4" fill="none" stroke="#8fa6cb" stroke-width="0.8"/><rect x="132.8" y="426.034" width="6.4" height="4.6" rx="0.5" fill="#6f8fbd"/><rect x="134" y="427.63399999999996" width="4" height="1.4" fill="#a9b9d4"/></g>
<g><ellipse cx="106" cy="436.70099999999996" rx="3.6" ry="1.9" fill="#dfe6f0" stroke="#a9b9d4" stroke-width="0.5"/><circle cx="106" cy="436.70099999999996" r="1.5" fill="#5a7db3"/><circle cx="106" cy="436.70099999999996" r="0.6" fill="#dfe6f0"/><polygon points="121.00,432.60 124.55,434.65 124.55,438.75 121.00,440.80 117.45,438.75 117.45,434.65" fill="#42669c"/><circle cx="121" cy="436.70099999999996" r="1.7" fill="#c9d5e8"/><circle cx="121" cy="436.70099999999996" r="0.7" fill="#6f8fbd"/><path d="M133.8 436.70099999999996v-1.6a2.1 2.1 0 0 1 4.2 0v0.4" fill="none" stroke="#8fa6cb" stroke-width="0.8"/><rect x="132.8" y="436.70099999999996" width="6.4" height="4.6" rx="0.5" fill="#6f8fbd"/><rect x="134" y="438.30099999999993" width="4" height="1.4" fill="#a9b9d4"/></g>
<g><ellipse cx="106" cy="447.368" rx="3.6" ry="1.9" fill="#dfe6f0" stroke="#a9b9d4" stroke-width="0.5"/><circle cx="106" cy="447.368" r="1.5" fill="#5a7db3"/><circle cx="106" cy="447.368" r="0.6" fill="#dfe6f0"/><polygon points="121.00,443.27 124.55,445.32 124.55,449.42 121.00,451.47 117.45,449.42 117.45,445.32" fill="#42669c"/><circle cx="121" cy="447.368" r="1.7" fill="#c9d5e8"/><circle cx="121" cy="447.368" r="0.7" fill="#6f8fbd"/><path d="M133.8 447.368v-1.6a2.1 2.1 0 0 1 4.2 0v0.4" fill="none" stroke="#8fa6cb" stroke-width="0.8"/><rect x="132.8" y="447.368" width="6.4" height="4.6" rx="0.5" fill="#6f8fbd"/><rect x="134" y="448.96799999999996" width="4" height="1.4" fill="#a9b9d4"/></g>
<g><ellipse cx="106" cy="458.03499999999997" rx="3.6" ry="1.9" fill="#dfe6f0" stroke="#a9b9d4" stroke-width="0.5"/><circle cx="106" cy="458.03499999999997" r="1.5" fill="#5a7db3"/><circle cx="106" cy="458.03499999999997" r="0.6" fill="#dfe6f0"/><polygon points="121.00,453.93 124.55,455.99 124.55,460.09 121.00,462.13 117.45,460.08 117.45,455.98" fill="#42669c"/><circle cx="121" cy="458.03499999999997" r="1.7" fill="#c9d5e8"/><circle cx="121" cy="458.03499999999997" r="0.7" fill="#6f8fbd"/><path d="M133.8 458.03499999999997v-1.6a2.1 2.1 0 0 1 4.2 0v0.4" fill="none" stroke="#8fa6cb" stroke-width="0.8"/><rect x="132.8" y="458.03499999999997" width="6.4" height="4.6" rx="0.5" fill="#6f8fbd"/><rect x="134" y="459.63499999999993" width="4" height="1.4" fill="#a9b9d4"/></g>
<g><ellipse cx="106" cy="468.702" rx="3.6" ry="1.9" fill="#dfe6f0" stroke="#a9b9d4" stroke-width="0.5"/><circle cx="106" cy="468.702" r="1.5" fill="#5a7db3"/><circle cx="106" cy="468.702" r="0.6" fill="#dfe6f0"/><polygon points="121.00,464.60 124.55,466.65 124.55,470.75 121.00,472.80 117.45,470.75 117.45,466.65" fill="#42669c"/><circle cx="121" cy="468.702" r="1.7" fill="#c9d5e8"/><circle cx="121" cy="468.702" r="0.7" fill="#6f8fbd"/><path d="M133.8 468.702v-1.6a2.1 2.1 0 0 1 4.2 0v0.4" fill="none" stroke="#8fa6cb" stroke-width="0.8"/><rect x="132.8" y="468.702" width="6.4" height="4.6" rx="0.5" fill="#6f8fbd"/><rect x="134" y="470.30199999999996" width="4" height="1.4" fill="#a9b9d4"/></g>
<g><ellipse cx="106" cy="479.36899999999997" rx="3.6" ry="1.9" fill="#dfe6f0" stroke="#a9b9d4" stroke-width="0.5"/><circle cx="106" cy="479.36899999999997" r="1.5" fill="#5a7db3"/><circle cx="106" cy="479.36899999999997" r="0.6" fill="#dfe6f0"/><polygon points="121.00,475.27 124.55,477.32 124.55,481.42 121.00,483.47 117.45,481.42 117.45,477.32" fill="#42669c"/><circle cx="121" cy="479.36899999999997" r="1.7" fill="#c9d5e8"/><circle cx="121" cy="479.36899999999997" r="0.7" fill="#6f8fbd"/><path d="M133.8 479.36899999999997v-1.6a2.1 2.1 0 0 1 4.2 0v0.4" fill="none" stroke="#8fa6cb" stroke-width="0.8"/><rect x="132.8" y="479.36899999999997" width="6.4" height="4.6" rx="0.5" fill="#6f8fbd"/><rect x="134" y="480.96899999999994" width="4" height="1.4" fill="#a9b9d4"/></g>
<g><ellipse cx="106" cy="490.036" rx="3.6" ry="1.9" fill="#dfe6f0" stroke="#a9b9d4" stroke-width="0.5"/><circle cx="106" cy="490.036" r="1.5" fill="#5a7db3"/><circle cx="106" cy="490.036" r="0.6" fill="#dfe6f0"/><polygon points="121.00,485.94 124.55,487.99 124.55,492.09 121.00,494.14 117.45,492.09 117.45,487.99" fill="#42669c"/><circle cx="121" cy="490.036" r="1.7" fill="#c9d5e8"/><circle cx="121" cy="490.036" r="0.7" fill="#6f8fbd"/><path d="M133.8 490.036v-1.6a2.1 2.1 0 0 1 4.2 0v0.4" fill="none" stroke="#8fa6cb" stroke-width="0.8"/><rect x="132.8" y="490.036" width="6.4" height="4.6" rx="0.5" fill="#6f8fbd"/><rect x="134" y="491.63599999999997" width="4" height="1.4" fill="#a9b9d4"/></g>
<g><ellipse cx="106" cy="500.703" rx="3.6" ry="1.9" fill="#dfe6f0" stroke="#a9b9d4" stroke-width="0.5"/><circle cx="106" cy="500.703" r="1.5" fill="#5a7db3"/><circle cx="106" cy="500.703" r="0.6" fill="#dfe6f0"/><polygon points="121.00,496.60 124.55,498.65 124.55,502.75 121.00,504.80 117.45,502.75 117.45,498.65" fill="#42669c"/><circle cx="121" cy="500.703" r="1.7" fill="#c9d5e8"/><circle cx="121" cy="500.703" r="0.7" fill="#6f8fbd"/><path d="M133.8 500.703v-1.6a2.1 2.1 0 0 1 4.2 0v0.4" fill="none" stroke="#8fa6cb" stroke-width="0.8"/><rect x="132.8" y="500.703" width="6.4" height="4.6" rx="0.5" fill="#6f8fbd"/><rect x="134" y="502.30299999999994" width="4" height="1.4" fill="#a9b9d4"/></g>
<g><ellipse cx="106" cy="511.37" rx="3.6" ry="1.9" fill="#dfe6f0" stroke="#a9b9d4" stroke-width="0.5"/><circle cx="106" cy="511.37" r="1.5" fill="#5a7db3"/><circle cx="106" cy="511.37" r="0.6" fill="#dfe6f0"/><polygon points="121.00,507.27 124.55,509.32 124.55,513.42 121.00,515.47 117.45,513.42 117.45,509.32" fill="#42669c"/><circle cx="121" cy="511.37" r="1.7" fill="#c9d5e8"/><circle cx="121" cy="511.37" r="0.7" fill="#6f8fbd"/><path d="M133.8 511.37v-1.6a2.1 2.1 0 0 1 4.2 0v0.4" fill="none" stroke="#8fa6cb" stroke-width="0.8"/><rect x="132.8" y="511.37" width="6.4" height="4.6" rx="0.5" fill="#6f8fbd"/><rect x="134" y="512.97" width="4" height="1.4" fill="#a9b9d4"/></g>
<g><ellipse cx="106" cy="522.037" rx="3.6" ry="1.9" fill="#dfe6f0" stroke="#a9b9d4" stroke-width="0.5"/><circle cx="106" cy="522.037" r="1.5" fill="#5a7db3"/><circle cx="106" cy="522.037" r="0.6" fill="#dfe6f0"/><polygon points="121.00,517.94 124.55,519.99 124.55,524.09 121.00,526.14 117.45,524.09 117.45,519.99" fill="#42669c"/><circle cx="121" cy="522.037" r="1.7" fill="#c9d5e8"/><circle cx="121" cy="522.037" r="0.7" fill="#6f8fbd"/><path d="M133.8 522.037v-1.6a2.1 2.1 0 0 1 4.2 0v0.4" fill="none" stroke="#8fa6cb" stroke-width="0.8"/><rect x="132.8" y="522.037" width="6.4" height="4.6" rx="0.5" fill="#6f8fbd"/><rect x="134" y="523.6370000000001" width="4" height="1.4" fill="#a9b9d4"/></g>
<g><ellipse cx="106" cy="532.704" rx="3.6" ry="1.9" fill="#dfe6f0" stroke="#a9b9d4" stroke-width="0.5"/><circle cx="106" cy="532.704" r="1.5" fill="#5a7db3"/><circle cx="106" cy="532.704" r="0.6" fill="#dfe6f0"/><polygon points="121.00,528.60 124.55,530.65 124.55,534.75 121.00,536.80 117.45,534.75 117.45,530.65" fill="#42669c"/><circle cx="121" cy="532.704" r="1.7" fill="#c9d5e8"/><circle cx="121" cy="532.704" r="0.7" fill="#6f8fbd"/><path d="M133.8 532.704v-1.6a2.1 2.1 0 0 1 4.2 0v0.4" fill="none" stroke="#8fa6cb" stroke-width="0.8"/><rect x="132.8" y="532.704" width="6.4" height="4.6" rx="0.5" fill="#6f8fbd"/><rect x="134" y="534.304" width="4" height="1.4" fill="#a9b9d4"/></g>
<g><ellipse cx="106" cy="543.371" rx="3.6" ry="1.9" fill="#dfe6f0" stroke="#a9b9d4" stroke-width="0.5"/><circle cx="106" cy="543.371" r="1.5" fill="#5a7db3"/><circle cx="106" cy="543.371" r="0.6" fill="#dfe6f0"/><polygon points="121.00,539.27 124.55,541.32 124.55,545.42 121.00,547.47 117.45,545.42 117.45,541.32" fill="#42669c"/><circle cx="121" cy="543.371" r="1.7" fill="#c9d5e8"/><circle cx="121" cy="543.371" r="0.7" fill="#6f8fbd"/><path d="M133.8 543.371v-1.6a2.1 2.1 0 0 1 4.2 0v0.4" fill="none" stroke="#8fa6cb" stroke-width="0.8"/><rect x="132.8" y="543.371" width="6.4" height="4.6" rx="0.5" fill="#6f8fbd"/><rect x="134" y="544.971" width="4" height="1.4" fill="#a9b9d4"/></g>
<g><ellipse cx="115" cy="265" rx="3.6" ry="1.9" fill="#eee" stroke="#c4c4c4" stroke-width="0.5"/><circle cx="115" cy="265" r="1.3" fill="#c4c4c4"/><path d="M111.6 262.2L118.4 267.8" stroke="#b0b0b0" stroke-width="0.7"/><polygon points="130.00,260.90 133.55,262.95 133.55,267.05 130.00,269.10 126.45,267.05 126.45,262.95" fill="#e4eaf3" stroke="#5a7db3" stroke-width="0.8"/><path d="M130 261V269M126.5 263L133.5 267M126.5 267L133.5 263" stroke="#5a7db3" stroke-width="0.5"/><path d="M142.8 265.0v-1.6a2.1 2.1 0 0 1 4.2 0v0.4" fill="none" stroke="#8fa6cb" stroke-width="0.8"/><rect x="141.8" y="265.0" width="6.4" height="4.6" rx="0.5" fill="#6f8fbd"/><rect x="143" y="266.59999999999997" width="4" height="1.4" fill="#a9b9d4"/></g>
<g><ellipse cx="115" cy="275.8" rx="3.6" ry="1.9" fill="#dfe6f0" stroke="#a9b9d4" stroke-width="0.5"/><circle cx="115" cy="275.8" r="1.5" fill="#5a7db3"/><circle cx="115" cy="275.8" r="0.6" fill="#dfe6f0"/><polygon points="130.00,271.70 133.55,273.75 133.55,277.85 130.00,279.90 126.45,277.85 126.45,273.75" fill="#e4eaf3" stroke="#5a7db3" stroke-width="0.8"/><path d="M130 271.8V279.8M126.5 273.8L133.5 277.8M126.5 277.8L133.5 273.8" stroke="#5a7db3" stroke-width="0.5"/><path d="M142.8 275.8v-1.6a2.1 2.1 0 0 1 4.2 0v0.4" fill="none" stroke="#8fa6cb" stroke-width="0.8"/><rect x="141.8" y="275.8" width="6.4" height="4.6" rx="0.5" fill="#6f8fbd"/><rect x="143" y="277.4" width="4" height="1.4" fill="#a9b9d4"/></g>
<g><path d="M15.6 262.4h4.4v5.4h-4.4z" fill="#e4eaf3" stroke="#42669c" stroke-width="0.7"/><circle cx="19" cy="263.6" r="1.8" fill="#fff" stroke="#42669c" stroke-width="0.7"/><path d="M14.6 268.4h5.4" stroke="#42669c" stroke-width="0.8"/></g>
<g fill="#42669c"><rect x="16.6" y="272.6" width="2.4" height="2.2"/><rect x="13.8" y="277" width="2.2" height="2"/><rect x="16.7" y="277" width="2.2" height="2"/><rect x="19.6" y="277" width="2.2" height="2"/><path d="M17.8 274.8v1.4M14.9 277v-0.9h5.8v0.9" fill="none" stroke="#42669c" stroke-width="0.6"/></g>
<rect x="53.6" y="95.8" width="12.4" height="12" fill="#cfe6f7" stroke="#b5d6ee" stroke-width="0.4"/>
<g><path d="M3.0 100.6h5v4.6h-5z" fill="#e4eaf3" stroke="#7f97bf" stroke-width="0.6"/><path d="M4.2 104l3.4-4.6 1.4 1-3.4 4.4z" fill="#9fb2d2" stroke="#5a7db3" stroke-width="0.4"/></g>
<g><path d="M16.400000000000002 100.6h5v4.6h-5z" fill="#e4eaf3" stroke="#7f97bf" stroke-width="0.6"/><path d="M17.6 104l3.4-4.6 1.4 1-3.4 4.4z" fill="#9fb2d2" stroke="#5a7db3" stroke-width="0.4"/></g>
<g><path d="M29.8 100.6h5v4.6h-5z" fill="#e4eaf3" stroke="#7f97bf" stroke-width="0.6"/><path d="M31 104l3.4-4.6 1.4 1-3.4 4.4z" fill="#9fb2d2" stroke="#5a7db3" stroke-width="0.4"/></g>
<g><path d="M43.199999999999996 100.6h5v4.6h-5z" fill="#e4eaf3" stroke="#7f97bf" stroke-width="0.6"/><path d="M44.4 104l3.4-4.6 1.4 1-3.4 4.4z" fill="#9fb2d2" stroke="#5a7db3" stroke-width="0.4"/></g>
<path d="M8 98.2v2.4M6.8 99.4h2.4" stroke="#42669c" stroke-width="0.6"/>
<circle cx="35.4" cy="99.8" r="2" fill="#f5f5f5" stroke="#7f97bf" stroke-width="0.6"/>
<path d="M47.4 98l2.2 2.2M49.6 98l-2.2 2.2" stroke="#e0202a" stroke-width="0.8"/>
<g><path d="M56.6 104.6l3.2-3 3.4 3z" fill="#6f8fbd"/><path d="M55.6 104.8h8.4" stroke="#42669c" stroke-width="0.6"/><circle cx="59.8" cy="99.4" r="1.3" fill="#42669c"/><path d="M57.4 98h4.8" stroke="#42669c" stroke-width="0.6"/></g>
<rect x="68.4" y="96.4" width="0.7" height="11" fill="#c9c9c9"/><rect x="99" y="96.4" width="0.7" height="11" fill="#c9c9c9"/>
<g fill="#e9eef6" stroke="#a9b9d4" stroke-width="0.6"><rect x="73.6" y="100" width="7.2" height="4.6" rx="0.8"/><circle cx="77.2" cy="102.3" r="1.2"/><rect x="87" y="99.4" width="7.2" height="4.6" rx="0.8"/><path d="M87.4 105.4l2-1.4"/></g>
<g><path d="M104.6 98.6l3 1.6v5l-3-1.6z" fill="#7f97bf"/><path d="M107.6 100.2l3.6-0.4v4.6l-3.6 0.8z" fill="#e4eaf3" stroke="#7f97bf" stroke-width="0.5"/><path d="M117.8 98.6l3 1.6v5l-3-1.6z" fill="#9fb2d2"/><path d="M120.8 100.2l3.6-0.4v4.6l-3.6 0.8z" fill="#e4eaf3" stroke="#9fb2d2" stroke-width="0.5"/></g>
<g fill="none" stroke="#42669c" stroke-width="0.8"><rect x="2.4" y="249.6" width="2" height="7.6"/><rect x="7.8" y="249.6" width="2" height="7.6"/><path d="M4.4 253.4h3.4"/></g>
<g fill="#e4eaf3" stroke="#6f8fbd" stroke-width="0.7"><rect x="15.6" y="249.6" width="8" height="7.6"/><path d="M19.6 249.6v7.6M15.6 253.4h8"/><rect x="29.6" y="249.6" width="8" height="7.6"/><path d="M33.6 249.6v7.6M29.6 253.4h8"/></g>
<g><path d="M46.2 249.8l3.4 1.8v3.8l-3.4 1.8-3.4-1.8v-3.8z" fill="#e4eaf3" stroke="#7f97bf" stroke-width="0.6"/><path d="M46.4 253.6l3.6 0l-1.8 2.6z" fill="#42669c"/></g>
<g><rect x="58" y="251.6" width="2.2" height="5.6" rx="0.8" fill="#e4eaf3" stroke="#42669c" stroke-width="0.7"/><circle cx="59.1" cy="249.8" r="0.9" fill="#42669c"/></g>
</svg>
<div style="left:157px;top:84.7px;width:867px;height:10.3px;background:#d9d9d9"></div>
<div class="t" style="left:158.4px;top:87.4px;color:#222;font-size:6.5px;letter-spacing:-0.1px">Área de trabalho</div>
<div style="left:157px;top:111.5px;width:867px;height:429.5px;background:#fff"></div>

<svg id="scene" style="left:157px;top:111.5px" width="867" height="429.5" viewBox="157 111.5 867 429.5">
<defs><radialGradient id="bead" cx="0.42" cy="0.27" r="0.62"><stop offset="0" stop-color="#56e877"/><stop offset="0.4" stop-color="#19cb45"/><stop offset="0.82" stop-color="#11ad38"/><stop offset="1" stop-color="#0b8429"/></radialGradient><linearGradient id="cg1" gradientUnits="userSpaceOnUse" x1="835.82" y1="173.33" x2="841.18" y2="186.27"><stop offset="0" stop-color="#8e8e8e"/><stop offset="0.1" stop-color="#cfcfcf"/><stop offset="0.32" stop-color="#ffffff"/><stop offset="0.5" stop-color="#e4e4e4"/><stop offset="0.8" stop-color="#b4b4b4"/><stop offset="1" stop-color="#8a8a8a"/></linearGradient><linearGradient id="cg2" gradientUnits="userSpaceOnUse" x1="849.5" y1="186.42" x2="855" y2="200.38"><stop offset="0" stop-color="#8e8e8e"/><stop offset="0.1" stop-color="#cfcfcf"/><stop offset="0.32" stop-color="#ffffff"/><stop offset="0.5" stop-color="#e4e4e4"/><stop offset="0.8" stop-color="#b4b4b4"/><stop offset="1" stop-color="#8a8a8a"/></linearGradient><linearGradient id="cg3" gradientUnits="userSpaceOnUse" x1="531.29" y1="287.41" x2="535.71" y2="298.99"><stop offset="0" stop-color="#8e8e8e"/><stop offset="0.1" stop-color="#cfcfcf"/><stop offset="0.32" stop-color="#ffffff"/><stop offset="0.5" stop-color="#e4e4e4"/><stop offset="0.8" stop-color="#b4b4b4"/><stop offset="1" stop-color="#8a8a8a"/></linearGradient><linearGradient id="cg4" gradientUnits="userSpaceOnUse" x1="646.2" y1="239.93" x2="651.4" y2="253.57"><stop offset="0" stop-color="#555"/><stop offset="0.3" stop-color="#7a7a7a"/><stop offset="1" stop-color="#4a4a4a"/></linearGradient><linearGradient id="cg5" gradientUnits="userSpaceOnUse" x1="622.34" y1="307.1" x2="626.66" y2="318.3"><stop offset="0" stop-color="#8e8e8e"/><stop offset="0.1" stop-color="#cfcfcf"/><stop offset="0.32" stop-color="#ffffff"/><stop offset="0.5" stop-color="#e4e4e4"/><stop offset="0.8" stop-color="#b4b4b4"/><stop offset="1" stop-color="#8a8a8a"/></linearGradient><linearGradient id="cg6" gradientUnits="userSpaceOnUse" x1="675.22" y1="257.05" x2="680.18" y2="270.15"><stop offset="0" stop-color="#555"/><stop offset="0.3" stop-color="#7a7a7a"/><stop offset="1" stop-color="#4a4a4a"/></linearGradient><linearGradient id="cg7" gradientUnits="userSpaceOnUse" x1="647.87" y1="296.64" x2="652.73" y2="309.76"><stop offset="0" stop-color="#555"/><stop offset="0.3" stop-color="#7a7a7a"/><stop offset="1" stop-color="#4a4a4a"/></linearGradient><linearGradient id="vg8" gradientUnits="userSpaceOnUse" x1="254.9" y1="0" x2="272.3" y2="0"><stop offset="0" stop-color="#b4b4b4"/><stop offset="0.16" stop-color="#e6e6e6"/><stop offset="0.42" stop-color="#ffffff"/><stop offset="0.72" stop-color="#dadada"/><stop offset="1" stop-color="#9a9a9a"/></linearGradient><linearGradient id="cg9" gradientUnits="userSpaceOnUse" x1="276.54" y1="405.83" x2="279.96" y2="414.37"><stop offset="0" stop-color="#b0b0b0"/><stop offset="0.12" stop-color="#e6e6e6"/><stop offset="0.38" stop-color="#ffffff"/><stop offset="0.62" stop-color="#f0f0f0"/><stop offset="0.86" stop-color="#cfcfcf"/><stop offset="1" stop-color="#a8a8a8"/></linearGradient><linearGradient id="cg10" gradientUnits="userSpaceOnUse" x1="286.69" y1="411.67" x2="289.81" y2="420.53"><stop offset="0" stop-color="#b0b0b0"/><stop offset="0.12" stop-color="#e6e6e6"/><stop offset="0.38" stop-color="#ffffff"/><stop offset="0.62" stop-color="#f0f0f0"/><stop offset="0.86" stop-color="#cfcfcf"/><stop offset="1" stop-color="#a8a8a8"/></linearGradient><linearGradient id="vg11" gradientUnits="userSpaceOnUse" x1="323.6" y1="0" x2="341" y2="0"><stop offset="0" stop-color="#b4b4b4"/><stop offset="0.16" stop-color="#e6e6e6"/><stop offset="0.42" stop-color="#ffffff"/><stop offset="0.72" stop-color="#dadada"/><stop offset="1" stop-color="#9a9a9a"/></linearGradient><linearGradient id="cg12" gradientUnits="userSpaceOnUse" x1="345.24" y1="416.43" x2="348.66" y2="424.97"><stop offset="0" stop-color="#b0b0b0"/><stop offset="0.12" stop-color="#e6e6e6"/><stop offset="0.38" stop-color="#ffffff"/><stop offset="0.62" stop-color="#f0f0f0"/><stop offset="0.86" stop-color="#cfcfcf"/><stop offset="1" stop-color="#a8a8a8"/></linearGradient><linearGradient id="cg13" gradientUnits="userSpaceOnUse" x1="355.39" y1="422.27" x2="358.51" y2="431.13"><stop offset="0" stop-color="#b0b0b0"/><stop offset="0.12" stop-color="#e6e6e6"/><stop offset="0.38" stop-color="#ffffff"/><stop offset="0.62" stop-color="#f0f0f0"/><stop offset="0.86" stop-color="#cfcfcf"/><stop offset="1" stop-color="#a8a8a8"/></linearGradient><linearGradient id="vg14" gradientUnits="userSpaceOnUse" x1="374.9" y1="0" x2="392.3" y2="0"><stop offset="0" stop-color="#b4b4b4"/><stop offset="0.16" stop-color="#e6e6e6"/><stop offset="0.42" stop-color="#ffffff"/><stop offset="0.72" stop-color="#dadada"/><stop offset="1" stop-color="#9a9a9a"/></linearGradient><linearGradient id="cg15" gradientUnits="userSpaceOnUse" x1="396.54" y1="452.83" x2="399.96" y2="461.37"><stop offset="0" stop-color="#b0b0b0"/><stop offset="0.12" stop-color="#e6e6e6"/><stop offset="0.38" stop-color="#ffffff"/><stop offset="0.62" stop-color="#f0f0f0"/><stop offset="0.86" stop-color="#cfcfcf"/><stop offset="1" stop-color="#a8a8a8"/></linearGradient><linearGradient id="cg16" gradientUnits="userSpaceOnUse" x1="406.69" y1="458.67" x2="409.81" y2="467.53"><stop offset="0" stop-color="#b0b0b0"/><stop offset="0.12" stop-color="#e6e6e6"/><stop offset="0.38" stop-color="#ffffff"/><stop offset="0.62" stop-color="#f0f0f0"/><stop offset="0.86" stop-color="#cfcfcf"/><stop offset="1" stop-color="#a8a8a8"/></linearGradient><linearGradient id="vg17" gradientUnits="userSpaceOnUse" x1="488.9" y1="0" x2="506.3" y2="0"><stop offset="0" stop-color="#b4b4b4"/><stop offset="0.16" stop-color="#e6e6e6"/><stop offset="0.42" stop-color="#ffffff"/><stop offset="0.72" stop-color="#dadada"/><stop offset="1" stop-color="#9a9a9a"/></linearGradient><linearGradient id="cg18" gradientUnits="userSpaceOnUse" x1="510.54" y1="439.83" x2="513.96" y2="448.37"><stop offset="0" stop-color="#b0b0b0"/><stop offset="0.12" stop-color="#e6e6e6"/><stop offset="0.38" stop-color="#ffffff"/><stop offset="0.62" stop-color="#f0f0f0"/><stop offset="0.86" stop-color="#cfcfcf"/><stop offset="1" stop-color="#a8a8a8"/></linearGradient><linearGradient id="cg19" gradientUnits="userSpaceOnUse" x1="520.69" y1="445.67" x2="523.81" y2="454.53"><stop offset="0" stop-color="#b0b0b0"/><stop offset="0.12" stop-color="#e6e6e6"/><stop offset="0.38" stop-color="#ffffff"/><stop offset="0.62" stop-color="#f0f0f0"/><stop offset="0.86" stop-color="#cfcfcf"/><stop offset="1" stop-color="#a8a8a8"/></linearGradient></defs>
<path d="M157.5 402.5L810 146.7" stroke="#8a8a8a" stroke-width="0.6" stroke-dasharray="6.6 5.4" fill="none"/>
<path d="M656 539.4L805 480.6" stroke="#b9b9b9" stroke-width="0.6" stroke-dasharray="5 4.4" fill="none"/>
<ellipse cx="909.2" cy="150.8" rx="5" ry="9.6" fill="#3d3d3d" stroke="#262626" stroke-width="1.2" transform="rotate(-21 909.2 150.8)"/>
<ellipse cx="907.6" cy="151.4" rx="4.2" ry="8.4" fill="#8c8c8c" stroke="#555" stroke-width="0.6" transform="rotate(-21 907.6 151.4)"/>
<polygon points="769.32,200.93 902.7,146.66 907.3,157.74 774.68,213.87" fill="url(#cg1)" stroke="#5a5a5a" stroke-width="0.5" stroke-linejoin="round"/>
<ellipse cx="905.6" cy="152" rx="3.2" ry="6.5" fill="#c4c4c4" stroke="#6a6a6a" stroke-width="0.7" transform="rotate(-21 905.6 152)"/>
<ellipse cx="903.6" cy="152.7" rx="3.0" ry="6.3" fill="none" stroke="#7a7a7a" stroke-width="0.5" transform="rotate(-21 903.6 152.7)"/>
<ellipse cx="911.7" cy="170.2" rx="5" ry="9.6" fill="#3d3d3d" stroke="#262626" stroke-width="1.2" transform="rotate(-21 911.7 170.2)"/>
<ellipse cx="910.1" cy="170.8" rx="4.2" ry="8.4" fill="#8c8c8c" stroke="#555" stroke-width="0.6" transform="rotate(-21 910.1 170.8)"/>
<polygon points="794.25,208.22 905.19,165.74 909.81,177.46 799.75,222.18" fill="url(#cg2)" stroke="#5a5a5a" stroke-width="0.5" stroke-linejoin="round"/>
<ellipse cx="908.1" cy="171.4" rx="3.2" ry="6.5" fill="#c4c4c4" stroke="#6a6a6a" stroke-width="0.7" transform="rotate(-21 908.1 171.4)"/>
<ellipse cx="906.1" cy="172.1" rx="3.0" ry="6.3" fill="none" stroke="#7a7a7a" stroke-width="0.5" transform="rotate(-21 906.1 172.1)"/>
<polygon points="638.6,225.4 642.4,224 644,225.6 640.4,227.2" fill="#8a8a8a" stroke="#555" stroke-width="0.4" stroke-linejoin="round"/>
<polygon points="750.8,183 754.6,181.6 756.2,183.2 752.6,184.8" fill="#8a8a8a" stroke="#555" stroke-width="0.4" stroke-linejoin="round"/>
<polygon points="797.4,209 801.2,207.6 802.8,209.2 799.2,210.8" fill="#8a8a8a" stroke="#555" stroke-width="0.4" stroke-linejoin="round"/>
<polygon points="642,227 690,259.5 690,286 642,256.5" fill="#898989" stroke="#505050" stroke-width="0.5" stroke-linejoin="round"/><polygon points="690,259.5 800.5,210 800.5,242 690,286" fill="#969696" stroke="#505050" stroke-width="0.5" stroke-linejoin="round"/><polygon points="642,227 754,184.4 800.5,210 690,259.5" fill="#797979" stroke="#505050" stroke-width="0.5" stroke-linejoin="round"/>
<polygon points="508.79,296.01 553.79,278.81 558.21,290.39 513.21,307.59" fill="url(#cg3)" stroke="#5a5a5a" stroke-width="0.5" stroke-linejoin="round"/>
<ellipse cx="653.8" cy="245" rx="4.4" ry="8.8" fill="#727272" stroke="#3f82c4" stroke-width="1.4" transform="rotate(-21 653.8 245)"/>
<polygon points="642.4,241.38 650,238.48 655.2,252.12 647.6,255.02" fill="url(#cg4)" stroke="none" stroke-width="0" stroke-linejoin="round"/>
<path d="M557 284.4L648 246.8" fill="none" stroke="#303030" stroke-width="16.6" stroke-linejoin="round"/><path d="M557 284.4L648 246.8" fill="none" stroke="#4a4a4a" stroke-width="15.400000000000002" stroke-dasharray="0.75 0.75" stroke-linejoin="round"/><path d="M557 284.4L648 246.8" fill="none" stroke="#787878" stroke-width="4.4" stroke-linejoin="round" transform="translate(-1 -3.3)" opacity="0.5"/><path d="M557 284.4L648 246.8" fill="none" stroke="#181818" stroke-width="3.6" stroke-linejoin="round" transform="translate(1 4.6)" opacity="0.4"/>
<path d="M0 -8.2A2.8 8.2 0 0 0 0 8.2" fill="none" stroke="#111" stroke-width="1.7" stroke-linecap="round" transform="translate(557.6 284.2) rotate(-21)"/>
<polygon points="599.84,315.8 644.84,298.4 649.16,309.6 604.16,327" fill="url(#cg5)" stroke="#5a5a5a" stroke-width="0.5" stroke-linejoin="round"/>
<ellipse cx="682.6" cy="262" rx="4.6" ry="8.8" fill="#727272" stroke="#d8c81a" stroke-width="1.4" transform="rotate(-21 682.6 262)"/>
<polygon points="671.52,258.45 678.92,255.65 683.88,268.75 676.48,271.55" fill="url(#cg6)" stroke="none" stroke-width="0" stroke-linejoin="round"/>
<path d="M652 302.6L669.14 295.74Q677.5 292.4 670.16 287.19L658.34 278.81Q651 273.6 659.44 270.48L677 264" fill="none" stroke="#303030" stroke-width="15" stroke-linejoin="round"/><path d="M652 302.6L669.14 295.74Q677.5 292.4 670.16 287.19L658.34 278.81Q651 273.6 659.44 270.48L677 264" fill="none" stroke="#4a4a4a" stroke-width="13.8" stroke-dasharray="0.75 0.75" stroke-linejoin="round"/><path d="M652 302.6L669.14 295.74Q677.5 292.4 670.16 287.19L658.34 278.81Q651 273.6 659.44 270.48L677 264" fill="none" stroke="#787878" stroke-width="4.4" stroke-linejoin="round" transform="translate(-1 -3.3)" opacity="0.5"/><path d="M652 302.6L669.14 295.74Q677.5 292.4 670.16 287.19L658.34 278.81Q651 273.6 659.44 270.48L677 264" fill="none" stroke="#181818" stroke-width="3.6" stroke-linejoin="round" transform="translate(1 4.6)" opacity="0.4"/>
<polygon points="645.17,297.64 650.57,295.64 655.43,308.76 650.03,310.76" fill="url(#cg7)" stroke="none" stroke-width="0" stroke-linejoin="round"/>
<path d="M0 -7.6A2.6 7.6 0 0 0 0 7.6" fill="none" stroke="#111" stroke-width="1.6" stroke-linecap="round" transform="translate(648.6 303.6) rotate(-21)"/>
<g transform="translate(840.5 153.8) rotate(-21.6)" font-family="Liberation Sans, sans-serif" font-size="5.2" fill="#5a5a5a" text-anchor="start"><text x="0" y="0">Adaptador campana de 125 a 120 mm</text></g>
<g transform="translate(886.6 140.4) rotate(-21.6)" font-family="Liberation Sans, sans-serif" font-size="4.4" fill="#555" text-anchor="middle"><text x="0" y="0">Cnb1</text><text x="0" y="4.6">D15</text></g>
<g transform="translate(802.4 157) rotate(-21.6)" font-family="Liberation Sans, sans-serif" font-size="4.6" fill="#686868" text-anchor="middle"><text x="0" y="0">116 mm</text><text x="0" y="4">1.69 m</text></g>
<g transform="translate(810.6 163.2) rotate(-21.6)" font-family="Liberation Sans, sans-serif" font-size="5.0" fill="#626262" text-anchor="middle"><text x="0" y="0">Conduta circular 125</text><text x="0" y="3.6">Conduta circular</text><text x="0" y="7.2">Cnb1</text></g>
<g transform="translate(816 172) rotate(-21.6)" font-family="Liberation Sans, sans-serif" font-size="4.6" fill="#686868" text-anchor="middle"><text x="0" y="0">116 mm</text><text x="0" y="3.8">1.15 m</text></g>
<g transform="translate(829.6 174.6) rotate(-21.6)" font-family="Liberation Sans, sans-serif" font-size="5.0" fill="#626262" text-anchor="middle"><text x="0" y="0">Conduta circular 125</text></g>
<g transform="translate(760 185.4) rotate(-21.6)" font-family="Liberation Sans, sans-serif" font-size="4.6" fill="#686868" text-anchor="start"><text x="0" y="0">125 x 120 mm</text></g>
<g transform="translate(927 134.6) rotate(27)" font-family="Liberation Sans, sans-serif" font-size="4.6" fill="#555" text-anchor="start"><text x="0" y="0">UGLB 125</text><text x="0" y="5">0.941 l/s</text><text x="0" y="10">33.59</text></g>
<g transform="translate(930 153.4) rotate(27)" font-family="Liberation Sans, sans-serif" font-size="4.6" fill="#555" text-anchor="start"><text x="0" y="0">UGLB 125</text><text x="0" y="5">0.941</text><text x="0" y="10">37</text></g>
<g transform="translate(490.5 285.6) rotate(-20.9)" font-family="Liberation Sans, sans-serif" font-size="5.2" fill="#5a5a5a" text-anchor="start"><text x="0" y="0">Adaptador campana de 125 a 120 mm</text></g>
<g transform="translate(532.6 274.4) rotate(-21.6)" font-family="Liberation Sans, sans-serif" font-size="4.4" fill="#686868" text-anchor="middle"><text x="0" y="0">Dcb1</text><text x="0" y="3.6">D1</text></g>
<g transform="translate(575.5 306.6) rotate(-20.9)" font-family="Liberation Sans, sans-serif" font-size="5.2" fill="#5a5a5a" text-anchor="start"><text x="0" y="0">Adaptador campana de 125 a 120 mm</text></g>
<g transform="translate(625 295.2) rotate(-21.6)" font-family="Liberation Sans, sans-serif" font-size="4.4" fill="#686868" text-anchor="middle"><text x="0" y="0">Dcb7</text><text x="0" y="3.6">D6</text></g>
<g transform="translate(708 262.6) rotate(30)" font-family="Liberation Sans, sans-serif" font-size="4.6" fill="#5a5a5a" text-anchor="start"><text x="0" y="0">Ø de 125 mm ... 21 %L</text></g>
<g transform="translate(701 264.6) rotate(30)" font-family="Liberation Sans, sans-serif" font-size="4.4" fill="#686868" text-anchor="start"><text x="0" y="0">Cnb7</text><text x="0" y="4">213</text></g>
<g transform="translate(644 259.6) rotate(30)" font-family="Liberation Sans, sans-serif" font-size="4.2" fill="#5a5a5a" text-anchor="start"><text x="0" y="0">Øext</text><text x="0" y="3.8">Hcc</text></g>
<g transform="translate(641 224.6) rotate(-60)" font-family="Liberation Sans, sans-serif" font-size="3.6" fill="#6a6a6a" text-anchor="start"><text x="0" y="0">Uni</text></g>
<g transform="translate(397.6 363.6) rotate(-21.6)" font-family="Liberation Sans, sans-serif" font-size="4.8" fill="#626262" text-anchor="start"><text x="0" y="0">Conduta circular semiflexível</text></g>
<g transform="translate(433 353.8) rotate(-21.6)" font-family="Liberation Sans, sans-serif" font-size="4.4" fill="#686868" text-anchor="middle"><text x="0" y="0">Dnb1</text><text x="0" y="4">D8</text></g>
<g transform="translate(262.6 359.6) rotate(31)" font-family="Liberation Sans, sans-serif" font-size="4.4" fill="#626262" text-anchor="start"><text x="0" y="0">Bocas de extracção circular semiflexível</text></g>
<g transform="translate(284 368.6) rotate(-21)" font-family="Liberation Sans, sans-serif" font-size="4.2" fill="#686868" text-anchor="middle"><text x="0" y="0">BE 75/1P</text><text x="0" y="3.8">Ch1</text><text x="0" y="7.6">D1</text></g>
<g transform="translate(383 377.6) rotate(-60)" font-family="Liberation Sans, sans-serif" font-size="4.0" fill="#5a5a5a" text-anchor="middle"><text x="0" y="0">D11</text><text x="0" y="3.6">Dnb1</text></g>
<g transform="translate(366 381.6) rotate(31)" font-family="Liberation Sans, sans-serif" font-size="4.2" fill="#5a5a5a" text-anchor="start"><text x="0" y="0">Conduta circular semiflexível</text></g>
<g transform="translate(265 468.8) rotate(-21)" font-family="Liberation Sans, sans-serif" font-size="4.2" fill="#686868" text-anchor="middle"><text x="0" y="0">D15</text><text x="0" y="3.8">Dnb1</text><text x="0" y="7.6">EXH RM2, 125</text></g>
<g transform="translate(331 481.8) rotate(-21)" font-family="Liberation Sans, sans-serif" font-size="4.2" fill="#686868" text-anchor="middle"><text x="0" y="0">D15</text><text x="0" y="3.8">Dnb1</text><text x="0" y="7.6">EXH RM2, 125</text></g>
<g transform="translate(366 500.2) rotate(-20)" font-family="Liberation Sans, sans-serif" font-size="4.2" fill="#686868" text-anchor="middle"><text x="0" y="0">SW RM</text><text x="0" y="3.8">12</text></g>
<g transform="translate(480 487.4) rotate(-20)" font-family="Liberation Sans, sans-serif" font-size="4.2" fill="#686868" text-anchor="middle"><text x="0" y="0">SW RM</text><text x="0" y="3.8">12</text></g>
<polygon points="437.5,301 481,326 481,344.4 437.5,317" fill="#a5a5a5" stroke="#5e5e5e" stroke-width="0.5" stroke-linejoin="round"/><polygon points="481,326 530,306 530,325 481,344.4" fill="#cacaca" stroke="#5e5e5e" stroke-width="0.5" stroke-linejoin="round"/><polygon points="437.5,301 486,281 530,306 481,326" fill="#b2b2b2" stroke="#5e5e5e" stroke-width="0.5" stroke-linejoin="round"/>
<polygon points="530,322.5 572.5,346 572.5,364 530,340" fill="#a5a5a5" stroke="#5e5e5e" stroke-width="0.5" stroke-linejoin="round"/><polygon points="572.5,346 622,326 622,344 572.5,364" fill="#cacaca" stroke="#5e5e5e" stroke-width="0.5" stroke-linejoin="round"/><polygon points="530,322.5 579,301 622,326 572.5,346" fill="#b2b2b2" stroke="#5e5e5e" stroke-width="0.5" stroke-linejoin="round"/>
<ellipse cx="476" cy="336" rx="2.7" ry="4.1" fill="#c4c4c4" stroke="#111" stroke-width="1.4" transform="rotate(-18 476 336)"/>
<ellipse cx="533.8" cy="328" rx="2.7" ry="4.1" fill="#c4c4c4" stroke="#111" stroke-width="1.4" transform="rotate(-18 533.8 328)"/>
<ellipse cx="568" cy="356" rx="2.7" ry="4.1" fill="#c4c4c4" stroke="#111" stroke-width="1.4" transform="rotate(-18 568 356)"/>
<ellipse cx="263.6" cy="459.2" rx="10.9" ry="4.1" fill="#bdbdbd" stroke="#6e6e6e" stroke-width="0.7"/><path d="M253.3 459.8A10.3 3.6 0 0 0 273.9 459.8" fill="none" stroke="#2a5888" stroke-width="1.9"/><path d="M254.9 425V458.8A8.7 2.7 0 0 0 272.3 458.8V425Z" fill="url(#vg8)" stroke="#9a9a9a" stroke-width="0.35"/><polygon points="248.5,416 269,406.7 286,416.7 266.6,426" fill="#b6b6b6" stroke="#777" stroke-width="0.4" stroke-linejoin="round"/><polygon points="271.79,407.73 281.29,403.93 284.71,412.47 275.21,416.27" fill="url(#cg9)" stroke="#888" stroke-width="0.35" stroke-linejoin="round"/><polygon points="248.5,416 266.6,426 266.6,433.8 248.5,424" fill="#c5c5c5" stroke="#777" stroke-width="0.4" stroke-linejoin="round"/><polygon points="266.6,426 287,416.8 287,423.6 284,425.6 283.5,427.4 278.5,429.4 266.6,433.8" fill="#d6d6d6" stroke="#777" stroke-width="0.4" stroke-linejoin="round"/><polygon points="282.44,413.17 290.94,410.17 294.06,419.03 285.56,422.03" fill="url(#cg10)" stroke="#888" stroke-width="0.35" stroke-linejoin="round"/>
<ellipse cx="332.3" cy="469.8" rx="10.9" ry="4.1" fill="#bdbdbd" stroke="#6e6e6e" stroke-width="0.7"/><path d="M322 470.4A10.3 3.6 0 0 0 342.6 470.4" fill="none" stroke="#2a5888" stroke-width="1.9"/><path d="M323.6 435.6V469.4A8.7 2.7 0 0 0 341 469.4V435.6Z" fill="url(#vg11)" stroke="#9a9a9a" stroke-width="0.35"/><polygon points="317.2,426.6 337.7,417.3 354.7,427.3 335.3,436.6" fill="#b6b6b6" stroke="#777" stroke-width="0.4" stroke-linejoin="round"/><polygon points="340.49,418.33 349.99,414.53 353.41,423.07 343.91,426.87" fill="url(#cg12)" stroke="#888" stroke-width="0.35" stroke-linejoin="round"/><polygon points="317.2,426.6 335.3,436.6 335.3,444.4 317.2,434.6" fill="#c5c5c5" stroke="#777" stroke-width="0.4" stroke-linejoin="round"/><polygon points="335.3,436.6 355.7,427.4 355.7,434.2 352.7,436.2 352.2,438 347.2,440 335.3,444.4" fill="#d6d6d6" stroke="#777" stroke-width="0.4" stroke-linejoin="round"/><polygon points="351.14,423.77 359.64,420.77 362.76,429.63 354.26,432.63" fill="url(#cg13)" stroke="#888" stroke-width="0.35" stroke-linejoin="round"/><ellipse cx="361.4" cy="425.2" rx="1.5" ry="4.3" fill="#b9b9b9" stroke="#151515" stroke-width="1.0" transform="rotate(-20 361.4 425.2)"/>
<ellipse cx="383.6" cy="505.4" rx="10.9" ry="4.1" fill="#bdbdbd" stroke="#6e6e6e" stroke-width="0.7"/><path d="M373.3 506A10.3 3.6 0 0 0 393.9 506" fill="none" stroke="#c8b820" stroke-width="1.9"/><path d="M374.9 472V505A8.7 2.7 0 0 0 392.3 505V472Z" fill="url(#vg14)" stroke="#9a9a9a" stroke-width="0.35"/><polygon points="368.5,463 389,453.7 406,463.7 386.6,473" fill="#b6b6b6" stroke="#777" stroke-width="0.4" stroke-linejoin="round"/><polygon points="391.79,454.73 401.29,450.93 404.71,459.47 395.21,463.27" fill="url(#cg15)" stroke="#888" stroke-width="0.35" stroke-linejoin="round"/><polygon points="368.5,463 386.6,473 386.6,480.8 368.5,471" fill="#c5c5c5" stroke="#777" stroke-width="0.4" stroke-linejoin="round"/><polygon points="386.6,473 407,463.8 407,470.6 404,472.6 403.5,474.4 398.5,476.4 386.6,480.8" fill="#d6d6d6" stroke="#777" stroke-width="0.4" stroke-linejoin="round"/><polygon points="402.44,460.17 410.94,457.17 414.06,466.03 405.56,469.03" fill="url(#cg16)" stroke="#888" stroke-width="0.35" stroke-linejoin="round"/><ellipse cx="412.7" cy="461.6" rx="1.5" ry="4.3" fill="#b9b9b9" stroke="#151515" stroke-width="1.0" transform="rotate(-20 412.7 461.6)"/>
<ellipse cx="497.6" cy="493.6" rx="10.9" ry="4.1" fill="#bdbdbd" stroke="#6e6e6e" stroke-width="0.7"/><path d="M487.3 494.2A10.3 3.6 0 0 0 507.9 494.2" fill="none" stroke="#c8b820" stroke-width="1.9"/><path d="M488.9 459V493.2A8.7 2.7 0 0 0 506.3 493.2V459Z" fill="url(#vg17)" stroke="#9a9a9a" stroke-width="0.35"/><polygon points="482.5,450 503,440.7 520,450.7 500.6,460" fill="#b6b6b6" stroke="#777" stroke-width="0.4" stroke-linejoin="round"/><polygon points="505.79,441.73 515.29,437.93 518.71,446.47 509.21,450.27" fill="url(#cg18)" stroke="#888" stroke-width="0.35" stroke-linejoin="round"/><polygon points="482.5,450 500.6,460 500.6,467.8 482.5,458" fill="#c5c5c5" stroke="#777" stroke-width="0.4" stroke-linejoin="round"/><polygon points="500.6,460 521,450.8 521,457.6 518,459.6 517.5,461.4 512.5,463.4 500.6,467.8" fill="#d6d6d6" stroke="#777" stroke-width="0.4" stroke-linejoin="round"/><polygon points="516.44,447.17 524.94,444.17 528.06,453.03 519.56,456.03" fill="url(#cg19)" stroke="#888" stroke-width="0.35" stroke-linejoin="round"/><ellipse cx="526.7" cy="448.6" rx="1.5" ry="4.3" fill="#b9b9b9" stroke="#151515" stroke-width="1.0" transform="rotate(-20 526.7 448.6)"/>
<g transform="translate(249 437.2) rotate(30)" font-family="Liberation Sans, sans-serif" font-size="4.3" fill="#4a4a4a" text-anchor="middle"><text x="0" y="0">Terminal tecto</text><text x="0" y="3.7">Ch1</text><text x="0" y="7.4">PL6</text></g>
<g transform="translate(317.7 447.8) rotate(30)" font-family="Liberation Sans, sans-serif" font-size="4.3" fill="#4a4a4a" text-anchor="middle"><text x="0" y="0">Terminal tecto</text><text x="0" y="3.7">Ch1</text><text x="0" y="7.4">PL6</text></g>
<g transform="translate(424.1 472.2) rotate(29)" font-family="Liberation Sans, sans-serif" font-size="4.3" fill="#4a4a4a" text-anchor="middle"><text x="0" y="0">Terminal tecto</text><text x="0" y="3.7">Ch1</text><text x="0" y="7.4">PL13</text></g>
<g transform="translate(538.1 459.2) rotate(29)" font-family="Liberation Sans, sans-serif" font-size="4.3" fill="#4a4a4a" text-anchor="middle"><text x="0" y="0">Terminal tecto</text><text x="0" y="3.7">Ch1</text><text x="0" y="7.4">PL13</text></g>
<path d="M443.5 308.6L307.14 360.64Q302 362.6 306.67 365.51L333.33 382.09Q338 385 332.9 387.06L283.6 407" fill="none" stroke="#0a7a26" stroke-width="9.8" stroke-linejoin="round"/><path d="M443.5 308.6L307.14 360.64Q302 362.6 306.67 365.51L333.33 382.09Q338 385 332.9 387.06L283.6 407" fill="none" stroke="#12b03a" stroke-width="8.8" stroke-linejoin="round"/><ellipse transform="translate(445.1 308) rotate(-20.89)" rx="2.6" ry="5.6" fill="#06360f"/><g fill="url(#bead)" stroke="#09701f" stroke-width="0.55"><ellipse transform="translate(440.7 309.67) rotate(-20.89)" rx="3.6" ry="5.6"/><ellipse transform="translate(435.09 311.81) rotate(-20.89)" rx="3.6" ry="5.6"/><ellipse transform="translate(429.49 313.95) rotate(-20.89)" rx="3.6" ry="5.6"/><ellipse transform="translate(423.88 316.09) rotate(-20.89)" rx="3.6" ry="5.6"/><ellipse transform="translate(418.27 318.23) rotate(-20.89)" rx="3.6" ry="5.6"/><ellipse transform="translate(412.67 320.37) rotate(-20.89)" rx="3.6" ry="5.6"/><ellipse transform="translate(407.06 322.51) rotate(-20.89)" rx="3.6" ry="5.6"/><ellipse transform="translate(401.46 324.64) rotate(-20.89)" rx="3.6" ry="5.6"/><ellipse transform="translate(395.85 326.78) rotate(-20.89)" rx="3.6" ry="5.6"/><ellipse transform="translate(390.25 328.92) rotate(-20.89)" rx="3.6" ry="5.6"/><ellipse transform="translate(384.64 331.06) rotate(-20.89)" rx="3.6" ry="5.6"/><ellipse transform="translate(379.03 333.2) rotate(-20.89)" rx="3.6" ry="5.6"/><ellipse transform="translate(373.43 335.34) rotate(-20.89)" rx="3.6" ry="5.6"/><ellipse transform="translate(367.82 337.48) rotate(-20.89)" rx="3.6" ry="5.6"/><ellipse transform="translate(362.22 339.62) rotate(-20.89)" rx="3.6" ry="5.6"/><ellipse transform="translate(356.61 341.76) rotate(-20.89)" rx="3.6" ry="5.6"/><ellipse transform="translate(351.01 343.9) rotate(-20.89)" rx="3.6" ry="5.6"/><ellipse transform="translate(345.4 346.04) rotate(-20.89)" rx="3.6" ry="5.6"/><ellipse transform="translate(339.8 348.18) rotate(-20.89)" rx="3.6" ry="5.6"/><ellipse transform="translate(334.19 350.32) rotate(-20.89)" rx="3.6" ry="5.6"/><ellipse transform="translate(328.58 352.45) rotate(-20.89)" rx="3.6" ry="5.6"/><ellipse transform="translate(322.98 354.59) rotate(-20.89)" rx="3.6" ry="5.6"/><ellipse transform="translate(317.37 356.73) rotate(-20.89)" rx="3.6" ry="5.6"/><ellipse transform="translate(311.77 358.87) rotate(-20.89)" rx="3.6" ry="5.6"/><ellipse transform="translate(306.18 361.06) rotate(-27.99)" rx="3.6" ry="5.6"/><ellipse transform="translate(306.49 365.39) rotate(33.08)" rx="3.6" ry="5.6"/><ellipse transform="translate(311.59 368.56) rotate(31.89)" rx="3.6" ry="5.6"/><ellipse transform="translate(316.68 371.73) rotate(31.89)" rx="3.6" ry="5.6"/><ellipse transform="translate(321.77 374.9) rotate(31.89)" rx="3.6" ry="5.6"/><ellipse transform="translate(326.87 378.07) rotate(31.89)" rx="3.6" ry="5.6"/><ellipse transform="translate(331.96 381.24) rotate(31.89)" rx="3.6" ry="5.6"/><ellipse transform="translate(335.3 385.47) rotate(-58.88)" rx="3.6" ry="5.6"/><ellipse transform="translate(330.04 388.22) rotate(-22.02)" rx="3.6" ry="5.6"/><ellipse transform="translate(324.48 390.47) rotate(-22.02)" rx="3.6" ry="5.6"/><ellipse transform="translate(318.92 392.72) rotate(-22.02)" rx="3.6" ry="5.6"/><ellipse transform="translate(313.36 394.97) rotate(-22.02)" rx="3.6" ry="5.6"/><ellipse transform="translate(307.79 397.22) rotate(-22.02)" rx="3.6" ry="5.6"/><ellipse transform="translate(302.23 399.47) rotate(-22.02)" rx="3.6" ry="5.6"/><ellipse transform="translate(296.67 401.71) rotate(-22.02)" rx="3.6" ry="5.6"/><ellipse transform="translate(291.11 403.96) rotate(-22.02)" rx="3.6" ry="5.6"/><ellipse transform="translate(285.54 406.21) rotate(-22.02)" rx="3.6" ry="5.6"/></g>
<path d="M456 316L345.13 359.01Q340 361 344.64 363.96L367.36 378.44Q372 381.4 366.93 383.54L292.6 415" fill="none" stroke="#0a7a26" stroke-width="9.8" stroke-linejoin="round"/><path d="M456 316L345.13 359.01Q340 361 344.64 363.96L367.36 378.44Q372 381.4 366.93 383.54L292.6 415" fill="none" stroke="#12b03a" stroke-width="8.8" stroke-linejoin="round"/><ellipse transform="translate(457.6 315.4) rotate(-21.2)" rx="2.6" ry="5.6" fill="#06360f"/><g fill="url(#bead)" stroke="#09701f" stroke-width="0.55"><ellipse transform="translate(453.2 317.09) rotate(-21.2)" rx="3.6" ry="5.6"/><ellipse transform="translate(447.61 319.26) rotate(-21.2)" rx="3.6" ry="5.6"/><ellipse transform="translate(442.02 321.43) rotate(-21.2)" rx="3.6" ry="5.6"/><ellipse transform="translate(436.42 323.6) rotate(-21.2)" rx="3.6" ry="5.6"/><ellipse transform="translate(430.83 325.77) rotate(-21.2)" rx="3.6" ry="5.6"/><ellipse transform="translate(425.23 327.94) rotate(-21.2)" rx="3.6" ry="5.6"/><ellipse transform="translate(419.64 330.11) rotate(-21.2)" rx="3.6" ry="5.6"/><ellipse transform="translate(414.05 332.28) rotate(-21.2)" rx="3.6" ry="5.6"/><ellipse transform="translate(408.45 334.45) rotate(-21.2)" rx="3.6" ry="5.6"/><ellipse transform="translate(402.86 336.62) rotate(-21.2)" rx="3.6" ry="5.6"/><ellipse transform="translate(397.26 338.79) rotate(-21.2)" rx="3.6" ry="5.6"/><ellipse transform="translate(391.67 340.96) rotate(-21.2)" rx="3.6" ry="5.6"/><ellipse transform="translate(386.08 343.13) rotate(-21.2)" rx="3.6" ry="5.6"/><ellipse transform="translate(380.48 345.3) rotate(-21.2)" rx="3.6" ry="5.6"/><ellipse transform="translate(374.89 347.47) rotate(-21.2)" rx="3.6" ry="5.6"/><ellipse transform="translate(369.3 349.64) rotate(-21.2)" rx="3.6" ry="5.6"/><ellipse transform="translate(363.7 351.81) rotate(-21.2)" rx="3.6" ry="5.6"/><ellipse transform="translate(358.11 353.98) rotate(-21.2)" rx="3.6" ry="5.6"/><ellipse transform="translate(352.51 356.15) rotate(-21.2)" rx="3.6" ry="5.6"/><ellipse transform="translate(346.92 358.32) rotate(-21.2)" rx="3.6" ry="5.6"/><ellipse transform="translate(342.47 361.67) rotate(79.16)" rx="3.6" ry="5.6"/><ellipse transform="translate(346.98 365.45) rotate(32.52)" rx="3.6" ry="5.6"/><ellipse transform="translate(352.04 368.68) rotate(32.52)" rx="3.6" ry="5.6"/><ellipse transform="translate(357.1 371.9) rotate(32.52)" rx="3.6" ry="5.6"/><ellipse transform="translate(362.16 375.13) rotate(32.52)" rx="3.6" ry="5.6"/><ellipse transform="translate(367.22 378.35) rotate(32.52)" rx="3.6" ry="5.6"/><ellipse transform="translate(368.31 382.83) rotate(-34.17)" rx="3.6" ry="5.6"/><ellipse transform="translate(362.84 385.28) rotate(-22.94)" rx="3.6" ry="5.6"/><ellipse transform="translate(357.31 387.62) rotate(-22.94)" rx="3.6" ry="5.6"/><ellipse transform="translate(351.78 389.95) rotate(-22.94)" rx="3.6" ry="5.6"/><ellipse transform="translate(346.26 392.29) rotate(-22.94)" rx="3.6" ry="5.6"/><ellipse transform="translate(340.73 394.63) rotate(-22.94)" rx="3.6" ry="5.6"/><ellipse transform="translate(335.21 396.97) rotate(-22.94)" rx="3.6" ry="5.6"/><ellipse transform="translate(329.68 399.31) rotate(-22.94)" rx="3.6" ry="5.6"/><ellipse transform="translate(324.16 401.65) rotate(-22.94)" rx="3.6" ry="5.6"/><ellipse transform="translate(318.63 403.98) rotate(-22.94)" rx="3.6" ry="5.6"/><ellipse transform="translate(313.11 406.32) rotate(-22.94)" rx="3.6" ry="5.6"/><ellipse transform="translate(307.58 408.66) rotate(-22.94)" rx="3.6" ry="5.6"/><ellipse transform="translate(302.05 411) rotate(-22.94)" rx="3.6" ry="5.6"/><ellipse transform="translate(296.53 413.34) rotate(-22.94)" rx="3.6" ry="5.6"/><ellipse transform="translate(292.6 415) rotate(-22.94)" rx="3.6" ry="5.6"/></g>
<path d="M470.4 324.8L387.1 358.54Q382 360.6 386.61 363.6L420.99 386Q425.6 389 420.49 391.03L351.6 418.4" fill="none" stroke="#0a7a26" stroke-width="9.8" stroke-linejoin="round"/><path d="M470.4 324.8L387.1 358.54Q382 360.6 386.61 363.6L420.99 386Q425.6 389 420.49 391.03L351.6 418.4" fill="none" stroke="#12b03a" stroke-width="8.8" stroke-linejoin="round"/><ellipse transform="translate(472 324.2) rotate(-22.05)" rx="2.6" ry="5.6" fill="#06360f"/><g fill="url(#bead)" stroke="#09701f" stroke-width="0.55"><ellipse transform="translate(467.62 325.93) rotate(-22.05)" rx="3.6" ry="5.6"/><ellipse transform="translate(462.06 328.18) rotate(-22.05)" rx="3.6" ry="5.6"/><ellipse transform="translate(456.5 330.43) rotate(-22.05)" rx="3.6" ry="5.6"/><ellipse transform="translate(450.94 332.68) rotate(-22.05)" rx="3.6" ry="5.6"/><ellipse transform="translate(445.37 334.93) rotate(-22.05)" rx="3.6" ry="5.6"/><ellipse transform="translate(439.81 337.19) rotate(-22.05)" rx="3.6" ry="5.6"/><ellipse transform="translate(434.25 339.44) rotate(-22.05)" rx="3.6" ry="5.6"/><ellipse transform="translate(428.69 341.69) rotate(-22.05)" rx="3.6" ry="5.6"/><ellipse transform="translate(423.13 343.94) rotate(-22.05)" rx="3.6" ry="5.6"/><ellipse transform="translate(417.57 346.2) rotate(-22.05)" rx="3.6" ry="5.6"/><ellipse transform="translate(412.01 348.45) rotate(-22.05)" rx="3.6" ry="5.6"/><ellipse transform="translate(406.45 350.7) rotate(-22.05)" rx="3.6" ry="5.6"/><ellipse transform="translate(400.88 352.95) rotate(-22.05)" rx="3.6" ry="5.6"/><ellipse transform="translate(395.32 355.2) rotate(-22.05)" rx="3.6" ry="5.6"/><ellipse transform="translate(389.76 357.46) rotate(-22.05)" rx="3.6" ry="5.6"/><ellipse transform="translate(384.59 360.31) rotate(-58.89)" rx="3.6" ry="5.6"/><ellipse transform="translate(388.09 364.56) rotate(33.08)" rx="3.6" ry="5.6"/><ellipse transform="translate(393.11 367.84) rotate(33.08)" rx="3.6" ry="5.6"/><ellipse transform="translate(398.14 371.11) rotate(33.08)" rx="3.6" ry="5.6"/><ellipse transform="translate(403.17 374.39) rotate(33.08)" rx="3.6" ry="5.6"/><ellipse transform="translate(408.2 377.66) rotate(33.08)" rx="3.6" ry="5.6"/><ellipse transform="translate(413.22 380.94) rotate(33.08)" rx="3.6" ry="5.6"/><ellipse transform="translate(418.25 384.21) rotate(33.08)" rx="3.6" ry="5.6"/><ellipse transform="translate(422.96 387.85) rotate(61.65)" rx="3.6" ry="5.6"/><ellipse transform="translate(419.2 391.54) rotate(-21.67)" rx="3.6" ry="5.6"/><ellipse transform="translate(413.63 393.76) rotate(-21.67)" rx="3.6" ry="5.6"/><ellipse transform="translate(408.05 395.97) rotate(-21.67)" rx="3.6" ry="5.6"/><ellipse transform="translate(402.48 398.19) rotate(-21.67)" rx="3.6" ry="5.6"/><ellipse transform="translate(396.9 400.4) rotate(-21.67)" rx="3.6" ry="5.6"/><ellipse transform="translate(391.32 402.62) rotate(-21.67)" rx="3.6" ry="5.6"/><ellipse transform="translate(385.75 404.83) rotate(-21.67)" rx="3.6" ry="5.6"/><ellipse transform="translate(380.17 407.05) rotate(-21.67)" rx="3.6" ry="5.6"/><ellipse transform="translate(374.59 409.26) rotate(-21.67)" rx="3.6" ry="5.6"/><ellipse transform="translate(369.02 411.48) rotate(-21.67)" rx="3.6" ry="5.6"/><ellipse transform="translate(363.44 413.69) rotate(-21.67)" rx="3.6" ry="5.6"/><ellipse transform="translate(357.87 415.91) rotate(-21.67)" rx="3.6" ry="5.6"/><ellipse transform="translate(352.29 418.13) rotate(-21.67)" rx="3.6" ry="5.6"/></g>
<path d="M548 335L438.52 377.99Q433.4 380 438.04 382.96L489.96 416.04Q494.6 419 489.47 420.99L403 454.6" fill="none" stroke="#0a7a26" stroke-width="9.8" stroke-linejoin="round"/><path d="M548 335L438.52 377.99Q433.4 380 438.04 382.96L489.96 416.04Q494.6 419 489.47 420.99L403 454.6" fill="none" stroke="#12b03a" stroke-width="8.8" stroke-linejoin="round"/><ellipse transform="translate(549.6 334.4) rotate(-21.44)" rx="2.6" ry="5.6" fill="#06360f"/><g fill="url(#bead)" stroke="#09701f" stroke-width="0.55"><ellipse transform="translate(545.21 336.1) rotate(-21.44)" rx="3.6" ry="5.6"/><ellipse transform="translate(539.62 338.29) rotate(-21.44)" rx="3.6" ry="5.6"/><ellipse transform="translate(534.04 340.48) rotate(-21.44)" rx="3.6" ry="5.6"/><ellipse transform="translate(528.45 342.68) rotate(-21.44)" rx="3.6" ry="5.6"/><ellipse transform="translate(522.87 344.87) rotate(-21.44)" rx="3.6" ry="5.6"/><ellipse transform="translate(517.28 347.06) rotate(-21.44)" rx="3.6" ry="5.6"/><ellipse transform="translate(511.7 349.25) rotate(-21.44)" rx="3.6" ry="5.6"/><ellipse transform="translate(506.11 351.45) rotate(-21.44)" rx="3.6" ry="5.6"/><ellipse transform="translate(500.53 353.64) rotate(-21.44)" rx="3.6" ry="5.6"/><ellipse transform="translate(494.94 355.83) rotate(-21.44)" rx="3.6" ry="5.6"/><ellipse transform="translate(489.36 358.03) rotate(-21.44)" rx="3.6" ry="5.6"/><ellipse transform="translate(483.77 360.22) rotate(-21.44)" rx="3.6" ry="5.6"/><ellipse transform="translate(478.19 362.41) rotate(-21.44)" rx="3.6" ry="5.6"/><ellipse transform="translate(472.6 364.61) rotate(-21.44)" rx="3.6" ry="5.6"/><ellipse transform="translate(467.02 366.8) rotate(-21.44)" rx="3.6" ry="5.6"/><ellipse transform="translate(461.43 368.99) rotate(-21.44)" rx="3.6" ry="5.6"/><ellipse transform="translate(455.85 371.18) rotate(-21.44)" rx="3.6" ry="5.6"/><ellipse transform="translate(450.26 373.38) rotate(-21.44)" rx="3.6" ry="5.6"/><ellipse transform="translate(444.68 375.57) rotate(-21.44)" rx="3.6" ry="5.6"/><ellipse transform="translate(439.1 377.76) rotate(-21.44)" rx="3.6" ry="5.6"/><ellipse transform="translate(436.53 381.76) rotate(48.31)" rx="3.6" ry="5.6"/><ellipse transform="translate(441.47 385.14) rotate(32.51)" rx="3.6" ry="5.6"/><ellipse transform="translate(446.53 388.37) rotate(32.51)" rx="3.6" ry="5.6"/><ellipse transform="translate(451.59 391.59) rotate(32.51)" rx="3.6" ry="5.6"/><ellipse transform="translate(456.65 394.82) rotate(32.51)" rx="3.6" ry="5.6"/><ellipse transform="translate(461.71 398.04) rotate(32.51)" rx="3.6" ry="5.6"/><ellipse transform="translate(466.77 401.27) rotate(32.51)" rx="3.6" ry="5.6"/><ellipse transform="translate(471.83 404.49) rotate(32.51)" rx="3.6" ry="5.6"/><ellipse transform="translate(476.89 407.72) rotate(32.51)" rx="3.6" ry="5.6"/><ellipse transform="translate(481.95 410.94) rotate(32.51)" rx="3.6" ry="5.6"/><ellipse transform="translate(487.01 414.16) rotate(32.51)" rx="3.6" ry="5.6"/><ellipse transform="translate(491.83 417.68) rotate(54.03)" rx="3.6" ry="5.6"/><ellipse transform="translate(488.35 421.43) rotate(-21.24)" rx="3.6" ry="5.6"/><ellipse transform="translate(482.76 423.6) rotate(-21.24)" rx="3.6" ry="5.6"/><ellipse transform="translate(477.17 425.77) rotate(-21.24)" rx="3.6" ry="5.6"/><ellipse transform="translate(471.58 427.95) rotate(-21.24)" rx="3.6" ry="5.6"/><ellipse transform="translate(465.98 430.12) rotate(-21.24)" rx="3.6" ry="5.6"/><ellipse transform="translate(460.39 432.3) rotate(-21.24)" rx="3.6" ry="5.6"/><ellipse transform="translate(454.8 434.47) rotate(-21.24)" rx="3.6" ry="5.6"/><ellipse transform="translate(449.21 436.64) rotate(-21.24)" rx="3.6" ry="5.6"/><ellipse transform="translate(443.61 438.82) rotate(-21.24)" rx="3.6" ry="5.6"/><ellipse transform="translate(438.02 440.99) rotate(-21.24)" rx="3.6" ry="5.6"/><ellipse transform="translate(432.43 443.16) rotate(-21.24)" rx="3.6" ry="5.6"/><ellipse transform="translate(426.84 445.34) rotate(-21.24)" rx="3.6" ry="5.6"/><ellipse transform="translate(421.24 447.51) rotate(-21.24)" rx="3.6" ry="5.6"/><ellipse transform="translate(415.65 449.68) rotate(-21.24)" rx="3.6" ry="5.6"/><ellipse transform="translate(410.06 451.86) rotate(-21.24)" rx="3.6" ry="5.6"/><ellipse transform="translate(404.47 454.03) rotate(-21.24)" rx="3.6" ry="5.6"/></g>
<path d="M561.6 345L480.7 377.55Q475.6 379.6 480.22 382.59L547.38 426.01Q552 429 546.83 430.86L517 441.6" fill="none" stroke="#0a7a26" stroke-width="9.8" stroke-linejoin="round"/><path d="M561.6 345L480.7 377.55Q475.6 379.6 480.22 382.59L547.38 426.01Q552 429 546.83 430.86L517 441.6" fill="none" stroke="#12b03a" stroke-width="8.8" stroke-linejoin="round"/><ellipse transform="translate(563.2 344.4) rotate(-21.92)" rx="2.6" ry="5.6" fill="#06360f"/><g fill="url(#bead)" stroke="#09701f" stroke-width="0.55"><ellipse transform="translate(558.82 346.12) rotate(-21.92)" rx="3.6" ry="5.6"/><ellipse transform="translate(553.25 348.36) rotate(-21.92)" rx="3.6" ry="5.6"/><ellipse transform="translate(547.68 350.6) rotate(-21.92)" rx="3.6" ry="5.6"/><ellipse transform="translate(542.12 352.84) rotate(-21.92)" rx="3.6" ry="5.6"/><ellipse transform="translate(536.55 355.08) rotate(-21.92)" rx="3.6" ry="5.6"/><ellipse transform="translate(530.98 357.32) rotate(-21.92)" rx="3.6" ry="5.6"/><ellipse transform="translate(525.42 359.56) rotate(-21.92)" rx="3.6" ry="5.6"/><ellipse transform="translate(519.85 361.8) rotate(-21.92)" rx="3.6" ry="5.6"/><ellipse transform="translate(514.29 364.04) rotate(-21.92)" rx="3.6" ry="5.6"/><ellipse transform="translate(508.72 366.28) rotate(-21.92)" rx="3.6" ry="5.6"/><ellipse transform="translate(503.15 368.51) rotate(-21.92)" rx="3.6" ry="5.6"/><ellipse transform="translate(497.59 370.75) rotate(-21.92)" rx="3.6" ry="5.6"/><ellipse transform="translate(492.02 372.99) rotate(-21.92)" rx="3.6" ry="5.6"/><ellipse transform="translate(486.45 375.23) rotate(-21.92)" rx="3.6" ry="5.6"/><ellipse transform="translate(480.89 377.47) rotate(-21.92)" rx="3.6" ry="5.6"/><ellipse transform="translate(478.99 381.65) rotate(44.06)" rx="3.6" ry="5.6"/><ellipse transform="translate(483.96 385) rotate(32.89)" rx="3.6" ry="5.6"/><ellipse transform="translate(489 388.26) rotate(32.89)" rx="3.6" ry="5.6"/><ellipse transform="translate(494.03 391.52) rotate(32.89)" rx="3.6" ry="5.6"/><ellipse transform="translate(499.07 394.78) rotate(32.89)" rx="3.6" ry="5.6"/><ellipse transform="translate(504.11 398.04) rotate(32.89)" rx="3.6" ry="5.6"/><ellipse transform="translate(509.15 401.29) rotate(32.89)" rx="3.6" ry="5.6"/><ellipse transform="translate(514.19 404.55) rotate(32.89)" rx="3.6" ry="5.6"/><ellipse transform="translate(519.23 407.81) rotate(32.89)" rx="3.6" ry="5.6"/><ellipse transform="translate(524.27 411.07) rotate(32.89)" rx="3.6" ry="5.6"/><ellipse transform="translate(529.3 414.32) rotate(32.89)" rx="3.6" ry="5.6"/><ellipse transform="translate(534.34 417.58) rotate(32.89)" rx="3.6" ry="5.6"/><ellipse transform="translate(539.38 420.84) rotate(32.89)" rx="3.6" ry="5.6"/><ellipse transform="translate(544.42 424.1) rotate(32.89)" rx="3.6" ry="5.6"/><ellipse transform="translate(549.22 427.64) rotate(54.28)" rx="3.6" ry="5.6"/><ellipse transform="translate(545.68 431.28) rotate(-19.8)" rx="3.6" ry="5.6"/><ellipse transform="translate(540.03 433.31) rotate(-19.8)" rx="3.6" ry="5.6"/><ellipse transform="translate(534.39 435.34) rotate(-19.8)" rx="3.6" ry="5.6"/><ellipse transform="translate(528.74 437.37) rotate(-19.8)" rx="3.6" ry="5.6"/><ellipse transform="translate(523.09 439.41) rotate(-19.8)" rx="3.6" ry="5.6"/><ellipse transform="translate(517.45 441.44) rotate(-19.8)" rx="3.6" ry="5.6"/></g>
<g transform="translate(463.6 341.4) rotate(-24)"><path d="M-2.8000000000000003 0H2.8000000000000003" stroke="#111" stroke-width="1.4"/><path d="M-5.4 0l3.4-2.4v4.8zM5.4 0l-3.4-2.4v4.8z" fill="#111"/></g>
<g transform="translate(520.8 332.6) rotate(-24)"><path d="M-2.8000000000000003 0H2.8000000000000003" stroke="#111" stroke-width="1.4"/><path d="M-5.4 0l3.4-2.4v4.8zM5.4 0l-3.4-2.4v4.8z" fill="#111"/></g>
<g transform="translate(556.6 361.6) rotate(-24)"><path d="M-2.8000000000000003 0H2.8000000000000003" stroke="#111" stroke-width="1.4"/><path d="M-5.4 0l3.4-2.4v4.8zM5.4 0l-3.4-2.4v4.8z" fill="#111"/></g>
<g transform="translate(371 422.4) rotate(-24)"><path d="M-2.8000000000000003 0H2.8000000000000003" stroke="#111" stroke-width="1.4"/><path d="M-5.4 0l3.4-2.4v4.8zM5.4 0l-3.4-2.4v4.8z" fill="#111"/></g>
<g transform="translate(422.6 457) rotate(-24)"><path d="M-2.8000000000000003 0H2.8000000000000003" stroke="#111" stroke-width="1.4"/><path d="M-5.4 0l3.4-2.4v4.8zM5.4 0l-3.4-2.4v4.8z" fill="#111"/></g>
<g transform="translate(537.5 445) rotate(-24)"><path d="M-2.8000000000000003 0H2.8000000000000003" stroke="#111" stroke-width="1.4"/><path d="M-5.4 0l3.4-2.4v4.8zM5.4 0l-3.4-2.4v4.8z" fill="#111"/></g>
<g transform="translate(264 472.6) rotate(90)"><path d="M-2.6 0H2.6" stroke="#111" stroke-width="1.4"/><path d="M-5.2 0l3.4-2.4v4.8zM5.2 0l-3.4-2.4v4.8z" fill="#111"/></g>
<g transform="translate(332.2 484.4) rotate(90)"><path d="M-2.6 0H2.6" stroke="#111" stroke-width="1.4"/><path d="M-5.2 0l3.4-2.4v4.8zM5.2 0l-3.4-2.4v4.8z" fill="#111"/></g>
<g transform="translate(384.6 519.6) rotate(90)"><path d="M-2.6 0H2.6" stroke="#111" stroke-width="1.4"/><path d="M-5.2 0l3.4-2.4v4.8zM5.2 0l-3.4-2.4v4.8z" fill="#111"/></g>
<g transform="translate(498 507) rotate(90)"><path d="M-2.6 0H2.6" stroke="#111" stroke-width="1.4"/><path d="M-5.2 0l3.4-2.4v4.8zM5.2 0l-3.4-2.4v4.8z" fill="#111"/></g>
<g>
<polygon points="698.6,246.8 710.2,242.6 719.6,253.6 710.4,249.6" fill="#dfe6f2" stroke="#aab4c8" stroke-width="0.4" stroke-linejoin="round" opacity="0.85"/>
<polygon points="710.4,249.6 704,250.6 698.6,246.8" fill="#c5cfe2" stroke="#aab4c8" stroke-width="0.3" stroke-linejoin="round"/>
<path d="M710.6 249.4V227" stroke="#0000f0" stroke-width="1.5"/><path d="M710.6 218.6l2.5 8.6h-5z" fill="#0000f0"/>
<path d="M710.6 249.4L692 256.6" stroke="#f00000" stroke-width="1.5"/><path d="M684.8 259.4l7.2-5.6 1.8 4.6z" fill="#f00000"/>
<path d="M710.6 249.4L726 257.8" stroke="#00d820" stroke-width="1.5"/><path d="M733 261.8l-8.6-1.6 2.4-4.4z" fill="#00d820"/>
</g>
<g font-family="Liberation Sans, sans-serif" font-weight="bold" font-size="7.4" text-anchor="middle">
<path d="M190.1 503.1V488.6" stroke="#0000e0" stroke-width="1.2"/><path d="M190.1 483l2 6.4h-4z" fill="#0000e0"/>
<path d="M190.1 503.1L178 507.7" stroke="#e00000" stroke-width="1.2"/><path d="M173.2 509.5l5-3.8 1.4 3.6z" fill="#e00000"/>
<path d="M190.1 503.1L200.4 508.8" stroke="#109a20" stroke-width="1.2"/><path d="M205.2 511.4l-6.2-1.2 2-3.4z" fill="#109a20"/>
<text x="190.5" y="480.6" fill="#2222f0">Z</text><text x="168.6" y="514" fill="#f02020">X</text><text x="208.6" y="515.2" fill="#20e040">Y</text></g>
</svg>
<div style="left:0;top:541px;width:1024px;height:10px;background:#f0f0f0"></div>
<svg style="left:3.5px;top:541px" width="9" height="9" viewBox="0 0 9 9"><circle cx="4.5" cy="4.5" r="4" fill="#1c86d8"/><rect x="4" y="3.8" width="1.1" height="3" fill="#fff"/><circle cx="4.55" cy="2.5" r="0.7" fill="#fff"/></svg>
<div class="t" style="left:17px;top:543px;color:#222;letter-spacing:-0.04px">Seleccione um grupo de elementos.</div>
<!-- bottom edge --><div style="left:0;top:550px;width:1024px;height:1px;background:#a6a6a6"></div>

</body></html>
